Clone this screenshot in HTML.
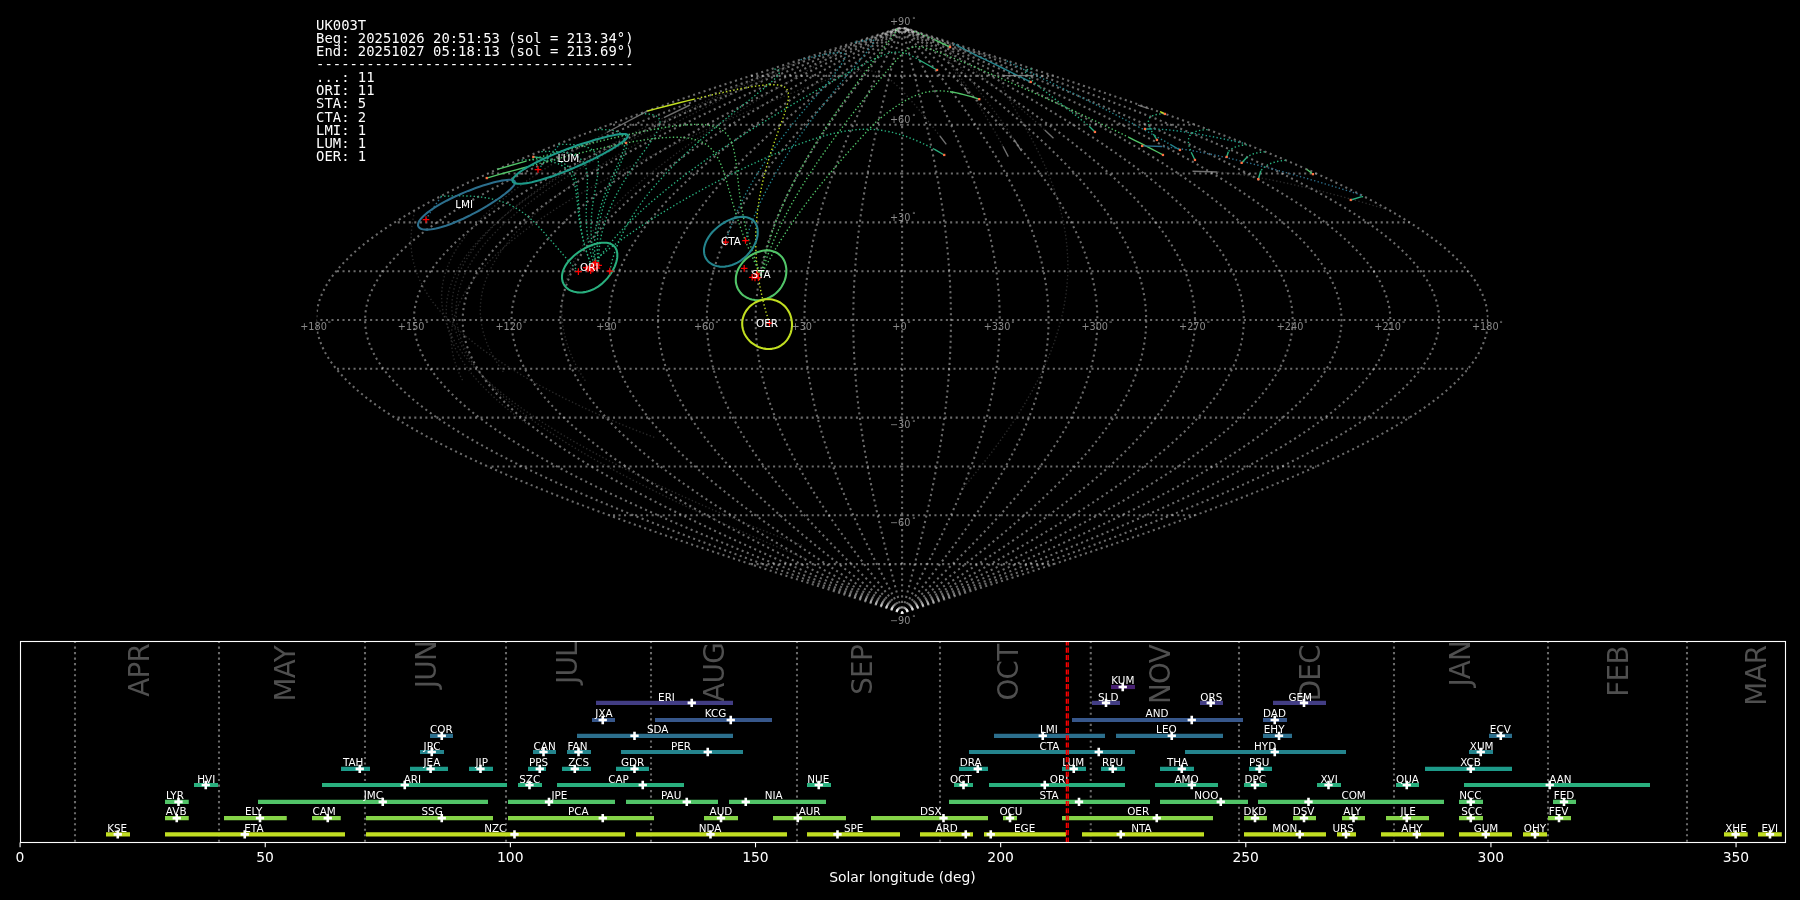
<!DOCTYPE html>
<html><head><meta charset="utf-8"><title>UK003T shower association</title>
<style>
html,body{margin:0;padding:0;background:#000;}
body{width:1800px;height:900px;overflow:hidden;}
svg{display:block;will-change:transform;opacity:0.999;}
text{white-space:pre;}
</style></head><body>
<svg width="1800" height="900" viewBox="0 0 1800 900">
<rect width="1800" height="900" fill="#000"/>
<clipPath id="skyclip"><rect x="316.7" y="0" width="1171.8" height="640"/></clipPath>
<g id="grid" clip-path="url(#skyclip)" fill="none" stroke="#fff" stroke-opacity="0.42" stroke-width="2.08" stroke-dasharray="2.08 3.44">
<path d="M902.1 564.12H750.46"/>
<path d="M1053.74 564.12H902.1" stroke-dashoffset="0.87"/>
<path d="M902.1 515.3H609.15"/>
<path d="M1195.05 515.3H902.1" stroke-dashoffset="0.87"/>
<path d="M902.1 466.48H487.81"/>
<path d="M1316.39 466.48H902.1" stroke-dashoffset="0.87"/>
<path d="M902.1 417.65H394.7"/>
<path d="M1409.5 417.65H902.1" stroke-dashoffset="0.87"/>
<path d="M902.1 368.82H336.16"/>
<path d="M1468.04 368.82H902.1" stroke-dashoffset="0.87"/>
<path d="M902.1 320H316.2"/>
<path d="M1488 320H902.1" stroke-dashoffset="0.87"/>
<path d="M902.1 271.18H336.16"/>
<path d="M1468.04 271.18H902.1" stroke-dashoffset="0.87"/>
<path d="M902.1 222.35H394.7"/>
<path d="M1409.5 222.35H902.1" stroke-dashoffset="0.87"/>
<path d="M902.1 173.53H487.81"/>
<path d="M1316.39 173.53H902.1" stroke-dashoffset="0.87"/>
<path d="M902.1 124.7H609.15"/>
<path d="M1195.05 124.7H902.1" stroke-dashoffset="0.87"/>
<path d="M902.1 75.88H750.46"/>
<path d="M1053.74 75.88H902.1" stroke-dashoffset="0.87"/>
<path d="M902.1 612.95 L881.65 606.44 L861.23 599.93 L840.86 593.42 L820.56 586.91 L800.36 580.4 L780.28 573.89 L760.36 567.38 L740.6 560.87 L721.05 554.36 L701.71 547.85 L682.62 541.34 L663.79 534.83 L645.26 528.32 L627.04 521.81 L609.15 515.3 L591.62 508.79 L574.47 502.28 L557.72 495.77 L541.38 489.26 L525.49 482.75 L510.06 476.24 L495.1 469.73 L480.64 463.22 L466.69 456.71 L453.27 450.2 L440.4 443.69 L428.1 437.18 L416.37 430.67 L405.23 424.16 L394.7 417.65 L384.78 411.14 L375.5 404.63 L366.85 398.12 L358.86 391.61 L351.53 385.1 L344.88 378.59 L338.9 372.08 L333.6 365.57 L329 359.06 L325.1 352.55 L321.9 346.04 L319.41 339.53 L317.63 333.02 L316.56 326.51 L316.2 320 L316.56 313.49 L317.63 306.98 L319.41 300.47 L321.9 293.96 L325.1 287.45 L329 280.94 L333.6 274.43 L338.9 267.92 L344.88 261.41 L351.53 254.9 L358.86 248.39 L366.85 241.88 L375.5 235.37 L384.78 228.86 L394.7 222.35 L405.23 215.84 L416.37 209.33 L428.1 202.82 L440.4 196.31 L453.27 189.8 L466.69 183.29 L480.64 176.78 L495.1 170.27 L510.06 163.76 L525.49 157.25 L541.38 150.74 L557.72 144.23 L574.47 137.72 L591.62 131.21 L609.15 124.7 L627.04 118.19 L645.26 111.68 L663.79 105.17 L682.62 98.66 L701.71 92.15 L721.05 85.64 L740.6 79.13 L760.36 72.62 L780.28 66.11 L800.36 59.6 L820.56 53.09 L840.86 46.58 L861.23 40.07 L881.65 33.56 L899.54 27.86" stroke-dashoffset="1"/>
<path d="M902.1 612.95 L883.36 606.44 L864.64 599.93 L845.96 593.42 L827.35 586.91 L808.84 580.4 L790.44 573.89 L772.17 567.38 L754.06 560.87 L736.13 554.36 L718.41 547.85 L700.91 541.34 L683.65 534.83 L666.66 528.32 L649.96 521.81 L633.56 515.3 L617.49 508.79 L601.77 502.28 L586.42 495.77 L571.44 489.26 L556.87 482.75 L542.73 476.24 L529.02 469.73 L515.76 463.22 L502.98 456.71 L490.68 450.2 L478.88 443.69 L467.6 437.18 L456.84 430.67 L446.63 424.16 L436.98 417.65 L427.89 411.14 L419.38 404.63 L411.46 398.12 L404.13 391.61 L397.41 385.1 L391.31 378.59 L385.83 372.08 L380.98 365.57 L376.76 359.06 L373.18 352.55 L370.25 346.04 L367.97 339.53 L366.33 333.02 L365.35 326.51 L365.03 320 L365.35 313.49 L366.33 306.98 L367.97 300.47 L370.25 293.96 L373.18 287.45 L376.76 280.94 L380.98 274.43 L385.83 267.92 L391.31 261.41 L397.41 254.9 L404.13 248.39 L411.46 241.88 L419.38 235.37 L427.89 228.86 L436.98 222.35 L446.63 215.84 L456.84 209.33 L467.6 202.82 L478.88 196.31 L490.68 189.8 L502.98 183.29 L515.76 176.78 L529.02 170.27 L542.73 163.76 L556.87 157.25 L571.44 150.74 L586.42 144.23 L601.77 137.72 L617.49 131.21 L633.56 124.7 L649.96 118.19 L666.66 111.68 L683.65 105.17 L700.91 98.66 L718.41 92.15 L736.13 85.64 L754.06 79.13 L772.17 72.62 L790.44 66.11 L808.84 59.6 L827.35 53.09 L845.96 46.58 L864.64 40.07 L883.36 33.56 L899.76 27.86" stroke-dashoffset="1"/>
<path d="M902.1 612.95 L885.06 606.44 L868.04 599.93 L851.06 593.42 L834.15 586.91 L817.32 580.4 L800.59 573.89 L783.98 567.38 L767.52 560.87 L751.22 554.36 L735.11 547.85 L719.2 541.34 L703.51 534.83 L688.07 528.32 L672.88 521.81 L657.97 515.3 L643.37 508.79 L629.07 502.28 L615.11 495.77 L601.5 489.26 L588.26 482.75 L575.4 476.24 L562.93 469.73 L550.88 463.22 L539.26 456.71 L528.08 450.2 L517.35 443.69 L507.1 437.18 L497.32 430.67 L488.04 424.16 L479.26 417.65 L471 411.14 L463.26 404.63 L456.06 398.12 L449.4 391.61 L443.3 385.1 L437.75 378.59 L432.76 372.08 L428.35 365.57 L424.52 359.06 L421.27 352.55 L418.6 346.04 L416.52 339.53 L415.04 333.02 L414.15 326.51 L413.85 320 L414.15 313.49 L415.04 306.98 L416.52 300.47 L418.6 293.96 L421.27 287.45 L424.52 280.94 L428.35 274.43 L432.76 267.92 L437.75 261.41 L443.3 254.9 L449.4 248.39 L456.06 241.88 L463.26 235.37 L471 228.86 L479.26 222.35 L488.04 215.84 L497.32 209.33 L507.1 202.82 L517.35 196.31 L528.08 189.8 L539.26 183.29 L550.88 176.78 L562.93 170.27 L575.4 163.76 L588.26 157.25 L601.5 150.74 L615.11 144.23 L629.07 137.72 L643.37 131.21 L657.97 124.7 L672.88 118.19 L688.07 111.68 L703.51 105.17 L719.2 98.66 L735.11 92.15 L751.22 85.64 L767.52 79.13 L783.98 72.62 L800.59 66.11 L817.32 59.6 L834.15 53.09 L851.06 46.58 L868.04 40.07 L885.06 33.56 L899.97 27.86" stroke-dashoffset="1"/>
<path d="M902.1 612.95 L886.76 606.44 L871.45 599.93 L856.17 593.42 L840.94 586.91 L825.79 580.4 L810.74 573.89 L795.79 567.38 L780.98 560.87 L766.31 554.36 L751.81 547.85 L737.49 541.34 L723.37 534.83 L709.47 528.32 L695.8 521.81 L682.39 515.3 L669.24 508.79 L656.38 502.28 L643.81 495.77 L631.56 489.26 L619.64 482.75 L608.07 476.24 L596.85 469.73 L586 463.22 L575.54 456.71 L565.48 450.2 L555.83 443.69 L546.6 437.18 L537.8 430.67 L529.45 424.16 L521.55 417.65 L514.11 411.14 L507.15 404.63 L500.67 398.12 L494.67 391.61 L489.18 385.1 L484.18 378.59 L479.7 372.08 L475.73 365.57 L472.28 359.06 L469.35 352.55 L466.95 346.04 L465.08 339.53 L463.75 333.02 L462.94 326.51 L462.68 320 L462.94 313.49 L463.75 306.98 L465.08 300.47 L466.95 293.96 L469.35 287.45 L472.28 280.94 L475.73 274.43 L479.7 267.92 L484.18 261.41 L489.18 254.9 L494.67 248.39 L500.67 241.88 L507.15 235.37 L514.11 228.86 L521.55 222.35 L529.45 215.84 L537.8 209.33 L546.6 202.82 L555.83 196.31 L565.48 189.8 L575.54 183.29 L586 176.78 L596.85 170.27 L608.07 163.76 L619.64 157.25 L631.56 150.74 L643.81 144.23 L656.38 137.72 L669.24 131.21 L682.39 124.7 L695.8 118.19 L709.47 111.68 L723.37 105.17 L737.49 98.66 L751.81 92.15 L766.31 85.64 L780.98 79.13 L795.79 72.62 L810.74 66.11 L825.79 59.6 L840.94 53.09 L856.17 46.58 L871.45 40.07 L886.76 33.56 L900.18 27.86" stroke-dashoffset="1"/>
<path d="M902.1 612.95 L888.47 606.44 L874.85 599.93 L861.27 593.42 L847.74 586.91 L834.27 580.4 L820.89 573.89 L807.61 567.38 L794.44 560.87 L781.4 554.36 L768.51 547.85 L755.78 541.34 L743.23 534.83 L730.87 528.32 L718.72 521.81 L706.8 515.3 L695.11 508.79 L683.68 502.28 L672.51 495.77 L661.62 489.26 L651.03 482.75 L640.74 476.24 L630.77 469.73 L621.13 463.22 L611.83 456.71 L602.88 450.2 L594.3 443.69 L586.1 437.18 L578.28 430.67 L570.85 424.16 L563.83 417.65 L557.22 411.14 L551.03 404.63 L545.27 398.12 L539.94 391.61 L535.06 385.1 L530.62 378.59 L526.63 372.08 L523.1 365.57 L520.04 359.06 L517.43 352.55 L515.3 346.04 L513.64 339.53 L512.45 333.02 L511.74 326.51 L511.5 320 L511.74 313.49 L512.45 306.98 L513.64 300.47 L515.3 293.96 L517.43 287.45 L520.04 280.94 L523.1 274.43 L526.63 267.92 L530.62 261.41 L535.06 254.9 L539.94 248.39 L545.27 241.88 L551.03 235.37 L557.22 228.86 L563.83 222.35 L570.85 215.84 L578.28 209.33 L586.1 202.82 L594.3 196.31 L602.88 189.8 L611.83 183.29 L621.13 176.78 L630.77 170.27 L640.74 163.76 L651.03 157.25 L661.62 150.74 L672.51 144.23 L683.68 137.72 L695.11 131.21 L706.8 124.7 L718.72 118.19 L730.87 111.68 L743.23 105.17 L755.78 98.66 L768.51 92.15 L781.4 85.64 L794.44 79.13 L807.61 72.62 L820.89 66.11 L834.27 59.6 L847.74 53.09 L861.27 46.58 L874.85 40.07 L888.47 33.56 L900.4 27.86" stroke-dashoffset="1"/>
<path d="M902.1 612.95 L890.17 606.44 L878.26 599.93 L866.37 593.42 L854.53 586.91 L842.75 580.4 L831.04 573.89 L819.42 567.38 L807.89 560.87 L796.49 554.36 L785.21 547.85 L774.07 541.34 L763.09 534.83 L752.28 528.32 L741.65 521.81 L731.21 515.3 L720.99 508.79 L710.98 502.28 L701.21 495.77 L691.68 489.26 L682.41 482.75 L673.41 476.24 L664.68 469.73 L656.25 463.22 L648.11 456.71 L640.29 450.2 L632.78 443.69 L625.6 437.18 L618.76 430.67 L612.26 424.16 L606.11 417.65 L600.33 411.14 L594.91 404.63 L589.87 398.12 L585.21 391.61 L580.94 385.1 L577.05 378.59 L573.56 372.08 L570.48 365.57 L567.79 359.06 L565.52 352.55 L563.65 346.04 L562.2 339.53 L561.16 333.02 L560.53 326.51 L560.33 320 L560.53 313.49 L561.16 306.98 L562.2 300.47 L563.65 293.96 L565.52 287.45 L567.79 280.94 L570.48 274.43 L573.56 267.92 L577.05 261.41 L580.94 254.9 L585.21 248.39 L589.87 241.88 L594.91 235.37 L600.33 228.86 L606.11 222.35 L612.26 215.84 L618.76 209.33 L625.6 202.82 L632.78 196.31 L640.29 189.8 L648.11 183.29 L656.25 176.78 L664.68 170.27 L673.41 163.76 L682.41 157.25 L691.68 150.74 L701.21 144.23 L710.98 137.72 L720.99 131.21 L731.21 124.7 L741.65 118.19 L752.28 111.68 L763.09 105.17 L774.07 98.66 L785.21 92.15 L796.49 85.64 L807.89 79.13 L819.42 72.62 L831.04 66.11 L842.75 59.6 L854.53 53.09 L866.37 46.58 L878.26 40.07 L890.17 33.56 L900.61 27.86" stroke-dashoffset="1"/>
<path d="M902.1 612.95 L891.88 606.44 L881.66 599.93 L871.48 593.42 L861.33 586.91 L851.23 580.4 L841.19 573.89 L831.23 567.38 L821.35 560.87 L811.57 554.36 L801.91 547.85 L792.36 541.34 L782.95 534.83 L773.68 528.32 L764.57 521.81 L755.62 515.3 L746.86 508.79 L738.28 502.28 L729.91 495.77 L721.74 489.26 L713.8 482.75 L706.08 476.24 L698.6 469.73 L691.37 463.22 L684.4 456.71 L677.69 450.2 L671.25 443.69 L665.1 437.18 L659.23 430.67 L653.66 424.16 L648.4 417.65 L643.44 411.14 L638.8 404.63 L634.48 398.12 L630.48 391.61 L626.82 385.1 L623.49 378.59 L620.5 372.08 L617.85 365.57 L615.55 359.06 L613.6 352.55 L612 346.04 L610.75 339.53 L609.86 333.02 L609.33 326.51 L609.15 320 L609.33 313.49 L609.86 306.98 L610.75 300.47 L612 293.96 L613.6 287.45 L615.55 280.94 L617.85 274.43 L620.5 267.92 L623.49 261.41 L626.82 254.9 L630.48 248.39 L634.48 241.88 L638.8 235.37 L643.44 228.86 L648.4 222.35 L653.66 215.84 L659.23 209.33 L665.1 202.82 L671.25 196.31 L677.69 189.8 L684.4 183.29 L691.37 176.78 L698.6 170.27 L706.08 163.76 L713.8 157.25 L721.74 150.74 L729.91 144.23 L738.28 137.72 L746.86 131.21 L755.62 124.7 L764.57 118.19 L773.68 111.68 L782.95 105.17 L792.36 98.66 L801.91 92.15 L811.57 85.64 L821.35 79.13 L831.23 72.62 L841.19 66.11 L851.23 59.6 L861.33 53.09 L871.48 46.58 L881.66 40.07 L891.88 33.56 L900.82 27.86" stroke-dashoffset="1"/>
<path d="M902.1 612.95 L893.58 606.44 L885.07 599.93 L876.58 593.42 L868.12 586.91 L859.71 580.4 L851.34 573.89 L843.04 567.38 L834.81 560.87 L826.66 554.36 L818.6 547.85 L810.65 541.34 L802.81 534.83 L795.08 528.32 L787.49 521.81 L780.04 515.3 L772.73 508.79 L765.59 502.28 L758.61 495.77 L751.8 489.26 L745.18 482.75 L738.75 476.24 L732.52 469.73 L726.49 463.22 L720.68 456.71 L715.09 450.2 L709.73 443.69 L704.6 437.18 L699.71 430.67 L695.07 424.16 L690.68 417.65 L686.55 411.14 L682.68 404.63 L679.08 398.12 L675.75 391.61 L672.7 385.1 L669.92 378.59 L667.43 372.08 L665.23 365.57 L663.31 359.06 L661.68 352.55 L660.35 346.04 L659.31 339.53 L658.57 333.02 L658.12 326.51 L657.98 320 L658.12 313.49 L658.57 306.98 L659.31 300.47 L660.35 293.96 L661.68 287.45 L663.31 280.94 L665.23 274.43 L667.43 267.92 L669.92 261.41 L672.7 254.9 L675.75 248.39 L679.08 241.88 L682.68 235.37 L686.55 228.86 L690.68 222.35 L695.07 215.84 L699.71 209.33 L704.6 202.82 L709.73 196.31 L715.09 189.8 L720.68 183.29 L726.49 176.78 L732.52 170.27 L738.75 163.76 L745.18 157.25 L751.8 150.74 L758.61 144.23 L765.59 137.72 L772.73 131.21 L780.04 124.7 L787.49 118.19 L795.08 111.68 L802.81 105.17 L810.65 98.66 L818.6 92.15 L826.66 85.64 L834.81 79.13 L843.04 72.62 L851.34 66.11 L859.71 59.6 L868.12 53.09 L876.58 46.58 L885.07 40.07 L893.58 33.56 L901.03 27.86" stroke-dashoffset="1"/>
<path d="M902.1 612.95 L895.28 606.44 L888.48 599.93 L881.69 593.42 L874.92 586.91 L868.19 580.4 L861.49 573.89 L854.85 567.38 L848.27 560.87 L841.75 554.36 L835.3 547.85 L828.94 541.34 L822.66 534.83 L816.49 528.32 L810.41 521.81 L804.45 515.3 L798.61 508.79 L792.89 502.28 L787.31 495.77 L781.86 489.26 L776.56 482.75 L771.42 476.24 L766.43 469.73 L761.61 463.22 L756.96 456.71 L752.49 450.2 L748.2 443.69 L744.1 437.18 L740.19 430.67 L736.48 424.16 L732.97 417.65 L729.66 411.14 L726.57 404.63 L723.68 398.12 L721.02 391.61 L718.58 385.1 L716.36 378.59 L714.37 372.08 L712.6 365.57 L711.07 359.06 L709.77 352.55 L708.7 346.04 L707.87 339.53 L707.28 333.02 L706.92 326.51 L706.8 320 L706.92 313.49 L707.28 306.98 L707.87 300.47 L708.7 293.96 L709.77 287.45 L711.07 280.94 L712.6 274.43 L714.37 267.92 L716.36 261.41 L718.58 254.9 L721.02 248.39 L723.68 241.88 L726.57 235.37 L729.66 228.86 L732.97 222.35 L736.48 215.84 L740.19 209.33 L744.1 202.82 L748.2 196.31 L752.49 189.8 L756.96 183.29 L761.61 176.78 L766.43 170.27 L771.42 163.76 L776.56 157.25 L781.86 150.74 L787.31 144.23 L792.89 137.72 L798.61 131.21 L804.45 124.7 L810.41 118.19 L816.49 111.68 L822.66 105.17 L828.94 98.66 L835.3 92.15 L841.75 85.64 L848.27 79.13 L854.85 72.62 L861.49 66.11 L868.19 59.6 L874.92 53.09 L881.69 46.58 L888.48 40.07 L895.28 33.56 L901.25 27.86" stroke-dashoffset="1"/>
<path d="M902.1 612.95 L896.99 606.44 L891.88 599.93 L886.79 593.42 L881.71 586.91 L876.66 580.4 L871.65 573.89 L866.66 567.38 L861.73 560.87 L856.84 554.36 L852 547.85 L847.23 541.34 L842.52 534.83 L837.89 528.32 L833.33 521.81 L828.86 515.3 L824.48 508.79 L820.19 502.28 L816 495.77 L811.92 489.26 L807.95 482.75 L804.09 476.24 L800.35 469.73 L796.73 463.22 L793.25 456.71 L789.89 450.2 L786.68 443.69 L783.6 437.18 L780.67 430.67 L777.88 424.16 L775.25 417.65 L772.77 411.14 L770.45 404.63 L768.29 398.12 L766.29 391.61 L764.46 385.1 L762.79 378.59 L761.3 372.08 L759.98 365.57 L758.83 359.06 L757.85 352.55 L757.05 346.04 L756.43 339.53 L755.98 333.02 L755.71 326.51 L755.62 320 L755.71 313.49 L755.98 306.98 L756.43 300.47 L757.05 293.96 L757.85 287.45 L758.83 280.94 L759.98 274.43 L761.3 267.92 L762.79 261.41 L764.46 254.9 L766.29 248.39 L768.29 241.88 L770.45 235.37 L772.77 228.86 L775.25 222.35 L777.88 215.84 L780.67 209.33 L783.6 202.82 L786.68 196.31 L789.89 189.8 L793.25 183.29 L796.73 176.78 L800.35 170.27 L804.09 163.76 L807.95 157.25 L811.92 150.74 L816 144.23 L820.19 137.72 L824.48 131.21 L828.86 124.7 L833.33 118.19 L837.89 111.68 L842.52 105.17 L847.23 98.66 L852 92.15 L856.84 85.64 L861.73 79.13 L866.66 72.62 L871.65 66.11 L876.66 59.6 L881.71 53.09 L886.79 46.58 L891.88 40.07 L896.99 33.56 L901.46 27.86" stroke-dashoffset="1"/>
<path d="M902.1 612.95 L898.69 606.44 L895.29 599.93 L891.89 593.42 L888.51 586.91 L885.14 580.4 L881.8 573.89 L878.48 567.38 L875.18 560.87 L871.92 554.36 L868.7 547.85 L865.52 541.34 L862.38 534.83 L859.29 528.32 L856.26 521.81 L853.27 515.3 L850.35 508.79 L847.49 502.28 L844.7 495.77 L841.98 489.26 L839.33 482.75 L836.76 476.24 L834.27 469.73 L831.86 463.22 L829.53 456.71 L827.3 450.2 L825.15 443.69 L823.1 437.18 L821.14 430.67 L819.29 424.16 L817.53 417.65 L815.88 411.14 L814.33 404.63 L812.89 398.12 L811.56 391.61 L810.34 385.1 L809.23 378.59 L808.23 372.08 L807.35 365.57 L806.58 359.06 L805.93 352.55 L805.4 346.04 L804.98 339.53 L804.69 333.02 L804.51 326.51 L804.45 320 L804.51 313.49 L804.69 306.98 L804.98 300.47 L805.4 293.96 L805.93 287.45 L806.58 280.94 L807.35 274.43 L808.23 267.92 L809.23 261.41 L810.34 254.9 L811.56 248.39 L812.89 241.88 L814.33 235.37 L815.88 228.86 L817.53 222.35 L819.29 215.84 L821.14 209.33 L823.1 202.82 L825.15 196.31 L827.3 189.8 L829.53 183.29 L831.86 176.78 L834.27 170.27 L836.76 163.76 L839.33 157.25 L841.98 150.74 L844.7 144.23 L847.49 137.72 L850.35 131.21 L853.27 124.7 L856.26 118.19 L859.29 111.68 L862.38 105.17 L865.52 98.66 L868.7 92.15 L871.92 85.64 L875.18 79.13 L878.48 72.62 L881.8 66.11 L885.14 59.6 L888.51 53.09 L891.89 46.58 L895.29 40.07 L898.69 33.56 L901.67 27.86" stroke-dashoffset="1"/>
<path d="M902.1 612.95 L900.4 606.44 L898.69 599.93 L897 593.42 L895.3 586.91 L893.62 580.4 L891.95 573.89 L890.29 567.38 L888.64 560.87 L887.01 554.36 L885.4 547.85 L883.81 541.34 L882.24 534.83 L880.7 528.32 L879.18 521.81 L877.69 515.3 L876.23 508.79 L874.8 502.28 L873.4 495.77 L872.04 489.26 L870.72 482.75 L869.43 476.24 L868.18 469.73 L866.98 463.22 L865.82 456.71 L864.7 450.2 L863.63 443.69 L862.6 437.18 L861.62 430.67 L860.69 424.16 L859.82 417.65 L858.99 411.14 L858.22 404.63 L857.5 398.12 L856.83 391.61 L856.22 385.1 L855.66 378.59 L855.17 372.08 L854.73 365.57 L854.34 359.06 L854.02 352.55 L853.75 346.04 L853.54 339.53 L853.39 333.02 L853.3 326.51 L853.27 320 L853.3 313.49 L853.39 306.98 L853.54 300.47 L853.75 293.96 L854.02 287.45 L854.34 280.94 L854.73 274.43 L855.17 267.92 L855.66 261.41 L856.22 254.9 L856.83 248.39 L857.5 241.88 L858.22 235.37 L858.99 228.86 L859.82 222.35 L860.69 215.84 L861.62 209.33 L862.6 202.82 L863.63 196.31 L864.7 189.8 L865.82 183.29 L866.98 176.78 L868.18 170.27 L869.43 163.76 L870.72 157.25 L872.04 150.74 L873.4 144.23 L874.8 137.72 L876.23 131.21 L877.69 124.7 L879.18 118.19 L880.7 111.68 L882.24 105.17 L883.81 98.66 L885.4 92.15 L887.01 85.64 L888.64 79.13 L890.29 72.62 L891.95 66.11 L893.62 59.6 L895.3 53.09 L897 46.58 L898.69 40.07 L900.4 33.56 L901.89 27.86" stroke-dashoffset="1"/>
<path d="M902.1 612.95 L902.1 606.44 L902.1 599.93 L902.1 593.42 L902.1 586.91 L902.1 580.4 L902.1 573.89 L902.1 567.38 L902.1 560.87 L902.1 554.36 L902.1 547.85 L902.1 541.34 L902.1 534.83 L902.1 528.32 L902.1 521.81 L902.1 515.3 L902.1 508.79 L902.1 502.28 L902.1 495.77 L902.1 489.26 L902.1 482.75 L902.1 476.24 L902.1 469.73 L902.1 463.22 L902.1 456.71 L902.1 450.2 L902.1 443.69 L902.1 437.18 L902.1 430.67 L902.1 424.16 L902.1 417.65 L902.1 411.14 L902.1 404.63 L902.1 398.12 L902.1 391.61 L902.1 385.1 L902.1 378.59 L902.1 372.08 L902.1 365.57 L902.1 359.06 L902.1 352.55 L902.1 346.04 L902.1 339.53 L902.1 333.02 L902.1 326.51 L902.1 320 L902.1 313.49 L902.1 306.98 L902.1 300.47 L902.1 293.96 L902.1 287.45 L902.1 280.94 L902.1 274.43 L902.1 267.92 L902.1 261.41 L902.1 254.9 L902.1 248.39 L902.1 241.88 L902.1 235.37 L902.1 228.86 L902.1 222.35 L902.1 215.84 L902.1 209.33 L902.1 202.82 L902.1 196.31 L902.1 189.8 L902.1 183.29 L902.1 176.78 L902.1 170.27 L902.1 163.76 L902.1 157.25 L902.1 150.74 L902.1 144.23 L902.1 137.72 L902.1 131.21 L902.1 124.7 L902.1 118.19 L902.1 111.68 L902.1 105.17 L902.1 98.66 L902.1 92.15 L902.1 85.64 L902.1 79.13 L902.1 72.62 L902.1 66.11 L902.1 59.6 L902.1 53.09 L902.1 46.58 L902.1 40.07 L902.1 33.56 L902.1 27.86" stroke-dashoffset="1"/>
<path d="M902.1 612.95 L903.8 606.44 L905.51 599.93 L907.2 593.42 L908.9 586.91 L910.58 580.4 L912.25 573.89 L913.91 567.38 L915.56 560.87 L917.19 554.36 L918.8 547.85 L920.39 541.34 L921.96 534.83 L923.5 528.32 L925.02 521.81 L926.51 515.3 L927.97 508.79 L929.4 502.28 L930.8 495.77 L932.16 489.26 L933.48 482.75 L934.77 476.24 L936.02 469.73 L937.22 463.22 L938.38 456.71 L939.5 450.2 L940.57 443.69 L941.6 437.18 L942.58 430.67 L943.51 424.16 L944.38 417.65 L945.21 411.14 L945.98 404.63 L946.7 398.12 L947.37 391.61 L947.98 385.1 L948.54 378.59 L949.03 372.08 L949.47 365.57 L949.86 359.06 L950.18 352.55 L950.45 346.04 L950.66 339.53 L950.81 333.02 L950.9 326.51 L950.93 320 L950.9 313.49 L950.81 306.98 L950.66 300.47 L950.45 293.96 L950.18 287.45 L949.86 280.94 L949.47 274.43 L949.03 267.92 L948.54 261.41 L947.98 254.9 L947.37 248.39 L946.7 241.88 L945.98 235.37 L945.21 228.86 L944.38 222.35 L943.51 215.84 L942.58 209.33 L941.6 202.82 L940.57 196.31 L939.5 189.8 L938.38 183.29 L937.22 176.78 L936.02 170.27 L934.77 163.76 L933.48 157.25 L932.16 150.74 L930.8 144.23 L929.4 137.72 L927.97 131.21 L926.51 124.7 L925.02 118.19 L923.5 111.68 L921.96 105.17 L920.39 98.66 L918.8 92.15 L917.19 85.64 L915.56 79.13 L913.91 72.62 L912.25 66.11 L910.58 59.6 L908.9 53.09 L907.2 46.58 L905.51 40.07 L903.8 33.56 L902.31 27.86" stroke-dashoffset="1"/>
<path d="M902.1 612.95 L905.51 606.44 L908.91 599.93 L912.31 593.42 L915.69 586.91 L919.06 580.4 L922.4 573.89 L925.72 567.38 L929.02 560.87 L932.28 554.36 L935.5 547.85 L938.68 541.34 L941.82 534.83 L944.91 528.32 L947.94 521.81 L950.93 515.3 L953.85 508.79 L956.71 502.28 L959.5 495.77 L962.22 489.26 L964.87 482.75 L967.44 476.24 L969.93 469.73 L972.34 463.22 L974.67 456.71 L976.9 450.2 L979.05 443.69 L981.1 437.18 L983.06 430.67 L984.91 424.16 L986.67 417.65 L988.32 411.14 L989.87 404.63 L991.31 398.12 L992.64 391.61 L993.86 385.1 L994.97 378.59 L995.97 372.08 L996.85 365.57 L997.62 359.06 L998.27 352.55 L998.8 346.04 L999.22 339.53 L999.51 333.02 L999.69 326.51 L999.75 320 L999.69 313.49 L999.51 306.98 L999.22 300.47 L998.8 293.96 L998.27 287.45 L997.62 280.94 L996.85 274.43 L995.97 267.92 L994.97 261.41 L993.86 254.9 L992.64 248.39 L991.31 241.88 L989.87 235.37 L988.32 228.86 L986.67 222.35 L984.91 215.84 L983.06 209.33 L981.1 202.82 L979.05 196.31 L976.9 189.8 L974.67 183.29 L972.34 176.78 L969.93 170.27 L967.44 163.76 L964.87 157.25 L962.22 150.74 L959.5 144.23 L956.71 137.72 L953.85 131.21 L950.93 124.7 L947.94 118.19 L944.91 111.68 L941.82 105.17 L938.68 98.66 L935.5 92.15 L932.28 85.64 L929.02 79.13 L925.72 72.62 L922.4 66.11 L919.06 59.6 L915.69 53.09 L912.31 46.58 L908.91 40.07 L905.51 33.56 L902.53 27.86" stroke-dashoffset="1"/>
<path d="M902.1 612.95 L907.21 606.44 L912.32 599.93 L917.41 593.42 L922.49 586.91 L927.54 580.4 L932.55 573.89 L937.54 567.38 L942.47 560.87 L947.36 554.36 L952.2 547.85 L956.97 541.34 L961.68 534.83 L966.31 528.32 L970.87 521.81 L975.34 515.3 L979.72 508.79 L984.01 502.28 L988.2 495.77 L992.28 489.26 L996.25 482.75 L1000.11 476.24 L1003.85 469.73 L1007.47 463.22 L1010.95 456.71 L1014.31 450.2 L1017.52 443.69 L1020.6 437.18 L1023.53 430.67 L1026.32 424.16 L1028.95 417.65 L1031.43 411.14 L1033.75 404.63 L1035.91 398.12 L1037.91 391.61 L1039.74 385.1 L1041.41 378.59 L1042.9 372.08 L1044.22 365.57 L1045.37 359.06 L1046.35 352.55 L1047.15 346.04 L1047.77 339.53 L1048.22 333.02 L1048.49 326.51 L1048.58 320 L1048.49 313.49 L1048.22 306.98 L1047.77 300.47 L1047.15 293.96 L1046.35 287.45 L1045.37 280.94 L1044.22 274.43 L1042.9 267.92 L1041.41 261.41 L1039.74 254.9 L1037.91 248.39 L1035.91 241.88 L1033.75 235.37 L1031.43 228.86 L1028.95 222.35 L1026.32 215.84 L1023.53 209.33 L1020.6 202.82 L1017.52 196.31 L1014.31 189.8 L1010.95 183.29 L1007.47 176.78 L1003.85 170.27 L1000.11 163.76 L996.25 157.25 L992.28 150.74 L988.2 144.23 L984.01 137.72 L979.72 131.21 L975.34 124.7 L970.87 118.19 L966.31 111.68 L961.68 105.17 L956.97 98.66 L952.2 92.15 L947.36 85.64 L942.47 79.13 L937.54 72.62 L932.55 66.11 L927.54 59.6 L922.49 53.09 L917.41 46.58 L912.32 40.07 L907.21 33.56 L902.74 27.86" stroke-dashoffset="1"/>
<path d="M902.1 612.95 L908.92 606.44 L915.72 599.93 L922.51 593.42 L929.28 586.91 L936.01 580.4 L942.71 573.89 L949.35 567.38 L955.93 560.87 L962.45 554.36 L968.9 547.85 L975.26 541.34 L981.54 534.83 L987.71 528.32 L993.79 521.81 L999.75 515.3 L1005.59 508.79 L1011.31 502.28 L1016.89 495.77 L1022.34 489.26 L1027.64 482.75 L1032.78 476.24 L1037.77 469.73 L1042.59 463.22 L1047.24 456.71 L1051.71 450.2 L1056 443.69 L1060.1 437.18 L1064.01 430.67 L1067.72 424.16 L1071.23 417.65 L1074.54 411.14 L1077.63 404.63 L1080.52 398.12 L1083.18 391.61 L1085.62 385.1 L1087.84 378.59 L1089.83 372.08 L1091.6 365.57 L1093.13 359.06 L1094.43 352.55 L1095.5 346.04 L1096.33 339.53 L1096.92 333.02 L1097.28 326.51 L1097.4 320 L1097.28 313.49 L1096.92 306.98 L1096.33 300.47 L1095.5 293.96 L1094.43 287.45 L1093.13 280.94 L1091.6 274.43 L1089.83 267.92 L1087.84 261.41 L1085.62 254.9 L1083.18 248.39 L1080.52 241.88 L1077.63 235.37 L1074.54 228.86 L1071.23 222.35 L1067.72 215.84 L1064.01 209.33 L1060.1 202.82 L1056 196.31 L1051.71 189.8 L1047.24 183.29 L1042.59 176.78 L1037.77 170.27 L1032.78 163.76 L1027.64 157.25 L1022.34 150.74 L1016.89 144.23 L1011.31 137.72 L1005.59 131.21 L999.75 124.7 L993.79 118.19 L987.71 111.68 L981.54 105.17 L975.26 98.66 L968.9 92.15 L962.45 85.64 L955.93 79.13 L949.35 72.62 L942.71 66.11 L936.01 59.6 L929.28 53.09 L922.51 46.58 L915.72 40.07 L908.92 33.56 L902.95 27.86" stroke-dashoffset="1"/>
<path d="M902.1 612.95 L910.62 606.44 L919.13 599.93 L927.62 593.42 L936.08 586.91 L944.49 580.4 L952.86 573.89 L961.16 567.38 L969.39 560.87 L977.54 554.36 L985.6 547.85 L993.55 541.34 L1001.39 534.83 L1009.12 528.32 L1016.71 521.81 L1024.16 515.3 L1031.47 508.79 L1038.61 502.28 L1045.59 495.77 L1052.4 489.26 L1059.02 482.75 L1065.45 476.24 L1071.68 469.73 L1077.71 463.22 L1083.52 456.71 L1089.11 450.2 L1094.47 443.69 L1099.6 437.18 L1104.49 430.67 L1109.13 424.16 L1113.52 417.65 L1117.65 411.14 L1121.52 404.63 L1125.12 398.12 L1128.45 391.61 L1131.5 385.1 L1134.28 378.59 L1136.77 372.08 L1138.97 365.57 L1140.89 359.06 L1142.52 352.55 L1143.85 346.04 L1144.89 339.53 L1145.63 333.02 L1146.08 326.51 L1146.22 320 L1146.08 313.49 L1145.63 306.98 L1144.89 300.47 L1143.85 293.96 L1142.52 287.45 L1140.89 280.94 L1138.97 274.43 L1136.77 267.92 L1134.28 261.41 L1131.5 254.9 L1128.45 248.39 L1125.12 241.88 L1121.52 235.37 L1117.65 228.86 L1113.52 222.35 L1109.13 215.84 L1104.49 209.33 L1099.6 202.82 L1094.47 196.31 L1089.11 189.8 L1083.52 183.29 L1077.71 176.78 L1071.68 170.27 L1065.45 163.76 L1059.02 157.25 L1052.4 150.74 L1045.59 144.23 L1038.61 137.72 L1031.47 131.21 L1024.16 124.7 L1016.71 118.19 L1009.12 111.68 L1001.39 105.17 L993.55 98.66 L985.6 92.15 L977.54 85.64 L969.39 79.13 L961.16 72.62 L952.86 66.11 L944.49 59.6 L936.08 53.09 L927.62 46.58 L919.13 40.07 L910.62 33.56 L903.17 27.86" stroke-dashoffset="1"/>
<path d="M902.1 612.95 L912.32 606.44 L922.54 599.93 L932.72 593.42 L942.87 586.91 L952.97 580.4 L963.01 573.89 L972.97 567.38 L982.85 560.87 L992.63 554.36 L1002.29 547.85 L1011.84 541.34 L1021.25 534.83 L1030.52 528.32 L1039.63 521.81 L1048.58 515.3 L1057.34 508.79 L1065.92 502.28 L1074.29 495.77 L1082.46 489.26 L1090.4 482.75 L1098.12 476.24 L1105.6 469.73 L1112.83 463.22 L1119.8 456.71 L1126.51 450.2 L1132.95 443.69 L1139.1 437.18 L1144.97 430.67 L1150.54 424.16 L1155.8 417.65 L1160.76 411.14 L1165.4 404.63 L1169.72 398.12 L1173.72 391.61 L1177.38 385.1 L1180.71 378.59 L1183.7 372.08 L1186.35 365.57 L1188.65 359.06 L1190.6 352.55 L1192.2 346.04 L1193.45 339.53 L1194.34 333.02 L1194.87 326.51 L1195.05 320 L1194.87 313.49 L1194.34 306.98 L1193.45 300.47 L1192.2 293.96 L1190.6 287.45 L1188.65 280.94 L1186.35 274.43 L1183.7 267.92 L1180.71 261.41 L1177.38 254.9 L1173.72 248.39 L1169.72 241.88 L1165.4 235.37 L1160.76 228.86 L1155.8 222.35 L1150.54 215.84 L1144.97 209.33 L1139.1 202.82 L1132.95 196.31 L1126.51 189.8 L1119.8 183.29 L1112.83 176.78 L1105.6 170.27 L1098.12 163.76 L1090.4 157.25 L1082.46 150.74 L1074.29 144.23 L1065.92 137.72 L1057.34 131.21 L1048.58 124.7 L1039.63 118.19 L1030.52 111.68 L1021.25 105.17 L1011.84 98.66 L1002.29 92.15 L992.63 85.64 L982.85 79.13 L972.97 72.62 L963.01 66.11 L952.97 59.6 L942.87 53.09 L932.72 46.58 L922.54 40.07 L912.32 33.56 L903.38 27.86" stroke-dashoffset="1"/>
<path d="M902.1 612.95 L914.03 606.44 L925.94 599.93 L937.83 593.42 L949.67 586.91 L961.45 580.4 L973.16 573.89 L984.78 567.38 L996.31 560.87 L1007.71 554.36 L1018.99 547.85 L1030.13 541.34 L1041.11 534.83 L1051.92 528.32 L1062.55 521.81 L1072.99 515.3 L1083.21 508.79 L1093.22 502.28 L1102.99 495.77 L1112.52 489.26 L1121.79 482.75 L1130.79 476.24 L1139.52 469.73 L1147.95 463.22 L1156.09 456.71 L1163.91 450.2 L1171.42 443.69 L1178.6 437.18 L1185.44 430.67 L1191.94 424.16 L1198.09 417.65 L1203.87 411.14 L1209.29 404.63 L1214.33 398.12 L1218.99 391.61 L1223.26 385.1 L1227.15 378.59 L1230.64 372.08 L1233.72 365.57 L1236.41 359.06 L1238.68 352.55 L1240.55 346.04 L1242 339.53 L1243.04 333.02 L1243.67 326.51 L1243.88 320 L1243.67 313.49 L1243.04 306.98 L1242 300.47 L1240.55 293.96 L1238.68 287.45 L1236.41 280.94 L1233.72 274.43 L1230.64 267.92 L1227.15 261.41 L1223.26 254.9 L1218.99 248.39 L1214.33 241.88 L1209.29 235.37 L1203.87 228.86 L1198.09 222.35 L1191.94 215.84 L1185.44 209.33 L1178.6 202.82 L1171.42 196.31 L1163.91 189.8 L1156.09 183.29 L1147.95 176.78 L1139.52 170.27 L1130.79 163.76 L1121.79 157.25 L1112.52 150.74 L1102.99 144.23 L1093.22 137.72 L1083.21 131.21 L1072.99 124.7 L1062.55 118.19 L1051.92 111.68 L1041.11 105.17 L1030.13 98.66 L1018.99 92.15 L1007.71 85.64 L996.31 79.13 L984.78 72.62 L973.16 66.11 L961.45 59.6 L949.67 53.09 L937.83 46.58 L925.94 40.07 L914.03 33.56 L903.59 27.86" stroke-dashoffset="1"/>
<path d="M902.1 612.95 L915.73 606.44 L929.35 599.93 L942.93 593.42 L956.46 586.91 L969.93 580.4 L983.31 573.89 L996.59 567.38 L1009.76 560.87 L1022.8 554.36 L1035.69 547.85 L1048.42 541.34 L1060.97 534.83 L1073.33 528.32 L1085.48 521.81 L1097.4 515.3 L1109.09 508.79 L1120.52 502.28 L1131.69 495.77 L1142.58 489.26 L1153.17 482.75 L1163.46 476.24 L1173.43 469.73 L1183.07 463.22 L1192.37 456.71 L1201.32 450.2 L1209.9 443.69 L1218.1 437.18 L1225.92 430.67 L1233.35 424.16 L1240.37 417.65 L1246.98 411.14 L1253.17 404.63 L1258.93 398.12 L1264.26 391.61 L1269.14 385.1 L1273.58 378.59 L1277.57 372.08 L1281.1 365.57 L1284.16 359.06 L1286.77 352.55 L1288.9 346.04 L1290.56 339.53 L1291.75 333.02 L1292.46 326.51 L1292.7 320 L1292.46 313.49 L1291.75 306.98 L1290.56 300.47 L1288.9 293.96 L1286.77 287.45 L1284.16 280.94 L1281.1 274.43 L1277.57 267.92 L1273.58 261.41 L1269.14 254.9 L1264.26 248.39 L1258.93 241.88 L1253.17 235.37 L1246.98 228.86 L1240.37 222.35 L1233.35 215.84 L1225.92 209.33 L1218.1 202.82 L1209.9 196.31 L1201.32 189.8 L1192.37 183.29 L1183.07 176.78 L1173.43 170.27 L1163.46 163.76 L1153.17 157.25 L1142.58 150.74 L1131.69 144.23 L1120.52 137.72 L1109.09 131.21 L1097.4 124.7 L1085.48 118.19 L1073.33 111.68 L1060.97 105.17 L1048.42 98.66 L1035.69 92.15 L1022.8 85.64 L1009.76 79.13 L996.59 72.62 L983.31 66.11 L969.93 59.6 L956.46 53.09 L942.93 46.58 L929.35 40.07 L915.73 33.56 L903.8 27.86" stroke-dashoffset="1"/>
<path d="M902.1 612.95 L917.44 606.44 L932.75 599.93 L948.03 593.42 L963.26 586.91 L978.41 580.4 L993.46 573.89 L1008.41 567.38 L1023.22 560.87 L1037.89 554.36 L1052.39 547.85 L1066.71 541.34 L1080.83 534.83 L1094.73 528.32 L1108.4 521.81 L1121.81 515.3 L1134.96 508.79 L1147.82 502.28 L1160.39 495.77 L1172.64 489.26 L1184.56 482.75 L1196.13 476.24 L1207.35 469.73 L1218.2 463.22 L1228.66 456.71 L1238.72 450.2 L1248.37 443.69 L1257.6 437.18 L1266.4 430.67 L1274.75 424.16 L1282.65 417.65 L1290.09 411.14 L1297.05 404.63 L1303.53 398.12 L1309.53 391.61 L1315.02 385.1 L1320.02 378.59 L1324.5 372.08 L1328.47 365.57 L1331.92 359.06 L1334.85 352.55 L1337.25 346.04 L1339.12 339.53 L1340.45 333.02 L1341.26 326.51 L1341.53 320 L1341.26 313.49 L1340.45 306.98 L1339.12 300.47 L1337.25 293.96 L1334.85 287.45 L1331.92 280.94 L1328.47 274.43 L1324.5 267.92 L1320.02 261.41 L1315.02 254.9 L1309.53 248.39 L1303.53 241.88 L1297.05 235.37 L1290.09 228.86 L1282.65 222.35 L1274.75 215.84 L1266.4 209.33 L1257.6 202.82 L1248.37 196.31 L1238.72 189.8 L1228.66 183.29 L1218.2 176.78 L1207.35 170.27 L1196.13 163.76 L1184.56 157.25 L1172.64 150.74 L1160.39 144.23 L1147.82 137.72 L1134.96 131.21 L1121.81 124.7 L1108.4 118.19 L1094.73 111.68 L1080.83 105.17 L1066.71 98.66 L1052.39 92.15 L1037.89 85.64 L1023.22 79.13 L1008.41 72.62 L993.46 66.11 L978.41 59.6 L963.26 53.09 L948.03 46.58 L932.75 40.07 L917.44 33.56 L904.02 27.86" stroke-dashoffset="1"/>
<path d="M902.1 612.95 L919.14 606.44 L936.16 599.93 L953.14 593.42 L970.05 586.91 L986.88 580.4 L1003.61 573.89 L1020.22 567.38 L1036.68 560.87 L1052.98 554.36 L1069.09 547.85 L1085 541.34 L1100.69 534.83 L1116.13 528.32 L1131.32 521.81 L1146.23 515.3 L1160.83 508.79 L1175.13 502.28 L1189.09 495.77 L1202.7 489.26 L1215.94 482.75 L1228.8 476.24 L1241.27 469.73 L1253.32 463.22 L1264.94 456.71 L1276.12 450.2 L1286.85 443.69 L1297.1 437.18 L1306.88 430.67 L1316.16 424.16 L1324.94 417.65 L1333.2 411.14 L1340.94 404.63 L1348.14 398.12 L1354.8 391.61 L1360.9 385.1 L1366.45 378.59 L1371.44 372.08 L1375.85 365.57 L1379.68 359.06 L1382.93 352.55 L1385.6 346.04 L1387.68 339.53 L1389.16 333.02 L1390.05 326.51 L1390.35 320 L1390.05 313.49 L1389.16 306.98 L1387.68 300.47 L1385.6 293.96 L1382.93 287.45 L1379.68 280.94 L1375.85 274.43 L1371.44 267.92 L1366.45 261.41 L1360.9 254.9 L1354.8 248.39 L1348.14 241.88 L1340.94 235.37 L1333.2 228.86 L1324.94 222.35 L1316.16 215.84 L1306.88 209.33 L1297.1 202.82 L1286.85 196.31 L1276.12 189.8 L1264.94 183.29 L1253.32 176.78 L1241.27 170.27 L1228.8 163.76 L1215.94 157.25 L1202.7 150.74 L1189.09 144.23 L1175.13 137.72 L1160.83 131.21 L1146.23 124.7 L1131.32 118.19 L1116.13 111.68 L1100.69 105.17 L1085 98.66 L1069.09 92.15 L1052.98 85.64 L1036.68 79.13 L1020.22 72.62 L1003.61 66.11 L986.88 59.6 L970.05 53.09 L953.14 46.58 L936.16 40.07 L919.14 33.56 L904.23 27.86" stroke-dashoffset="1"/>
<path d="M902.1 612.95 L920.84 606.44 L939.56 599.93 L958.24 593.42 L976.85 586.91 L995.36 580.4 L1013.76 573.89 L1032.03 567.38 L1050.14 560.87 L1068.07 554.36 L1085.79 547.85 L1103.29 541.34 L1120.55 534.83 L1137.54 528.32 L1154.24 521.81 L1170.64 515.3 L1186.71 508.79 L1202.43 502.28 L1217.78 495.77 L1232.76 489.26 L1247.33 482.75 L1261.47 476.24 L1275.18 469.73 L1288.44 463.22 L1301.22 456.71 L1313.52 450.2 L1325.32 443.69 L1336.6 437.18 L1347.36 430.67 L1357.57 424.16 L1367.22 417.65 L1376.31 411.14 L1384.82 404.63 L1392.74 398.12 L1400.07 391.61 L1406.79 385.1 L1412.89 378.59 L1418.37 372.08 L1423.22 365.57 L1427.44 359.06 L1431.02 352.55 L1433.95 346.04 L1436.23 339.53 L1437.87 333.02 L1438.85 326.51 L1439.17 320 L1438.85 313.49 L1437.87 306.98 L1436.23 300.47 L1433.95 293.96 L1431.02 287.45 L1427.44 280.94 L1423.22 274.43 L1418.37 267.92 L1412.89 261.41 L1406.79 254.9 L1400.07 248.39 L1392.74 241.88 L1384.82 235.37 L1376.31 228.86 L1367.22 222.35 L1357.57 215.84 L1347.36 209.33 L1336.6 202.82 L1325.32 196.31 L1313.52 189.8 L1301.22 183.29 L1288.44 176.78 L1275.18 170.27 L1261.47 163.76 L1247.33 157.25 L1232.76 150.74 L1217.78 144.23 L1202.43 137.72 L1186.71 131.21 L1170.64 124.7 L1154.24 118.19 L1137.54 111.68 L1120.55 105.17 L1103.29 98.66 L1085.79 92.15 L1068.07 85.64 L1050.14 79.13 L1032.03 72.62 L1013.76 66.11 L995.36 59.6 L976.85 53.09 L958.24 46.58 L939.56 40.07 L920.84 33.56 L904.44 27.86" stroke-dashoffset="1"/>
<path d="M902.1 612.95 L922.55 606.44 L942.97 599.93 L963.34 593.42 L983.64 586.91 L1003.84 580.4 L1023.92 573.89 L1043.84 567.38 L1063.6 560.87 L1083.15 554.36 L1102.49 547.85 L1121.58 541.34 L1140.41 534.83 L1158.94 528.32 L1177.16 521.81 L1195.05 515.3 L1212.58 508.79 L1229.73 502.28 L1246.48 495.77 L1262.82 489.26 L1278.71 482.75 L1294.14 476.24 L1309.1 469.73 L1323.56 463.22 L1337.51 456.71 L1350.93 450.2 L1363.8 443.69 L1376.1 437.18 L1387.83 430.67 L1398.97 424.16 L1409.5 417.65 L1419.42 411.14 L1428.7 404.63 L1437.35 398.12 L1445.34 391.61 L1452.67 385.1 L1459.32 378.59 L1465.3 372.08 L1470.6 365.57 L1475.2 359.06 L1479.1 352.55 L1482.3 346.04 L1484.79 339.53 L1486.57 333.02 L1487.64 326.51 L1488 320 L1487.64 313.49 L1486.57 306.98 L1484.79 300.47 L1482.3 293.96 L1479.1 287.45 L1475.2 280.94 L1470.6 274.43 L1465.3 267.92 L1459.32 261.41 L1452.67 254.9 L1445.34 248.39 L1437.35 241.88 L1428.7 235.37 L1419.42 228.86 L1409.5 222.35 L1398.97 215.84 L1387.83 209.33 L1376.1 202.82 L1363.8 196.31 L1350.93 189.8 L1337.51 183.29 L1323.56 176.78 L1309.1 170.27 L1294.14 163.76 L1278.71 157.25 L1262.82 150.74 L1246.48 144.23 L1229.73 137.72 L1212.58 131.21 L1195.05 124.7 L1177.16 118.19 L1158.94 111.68 L1140.41 105.17 L1121.58 98.66 L1102.49 92.15 L1083.15 85.64 L1063.6 79.13 L1043.84 72.62 L1023.92 66.11 L1003.84 59.6 L983.64 53.09 L963.34 46.58 L942.97 40.07 L922.55 33.56 L904.66 27.86" stroke-dashoffset="1"/>
</g>
<g id="gridlabels">
<text x="901.8" y="329.6" font-family="DejaVu Sans, Liberation Sans, sans-serif" font-size="9.7" fill="#8a8a8a" text-anchor="middle">+0<tspan font-size="6.8" dy="-5.7" dx="0.5">∘</tspan></text>
<text x="804.15" y="329.6" font-family="DejaVu Sans, Liberation Sans, sans-serif" font-size="9.7" fill="#8a8a8a" text-anchor="middle">+30<tspan font-size="6.8" dy="-5.7" dx="0.5">∘</tspan></text>
<text x="706.5" y="329.6" font-family="DejaVu Sans, Liberation Sans, sans-serif" font-size="9.7" fill="#8a8a8a" text-anchor="middle">+60<tspan font-size="6.8" dy="-5.7" dx="0.5">∘</tspan></text>
<text x="608.85" y="329.6" font-family="DejaVu Sans, Liberation Sans, sans-serif" font-size="9.7" fill="#8a8a8a" text-anchor="middle">+90<tspan font-size="6.8" dy="-5.7" dx="0.5">∘</tspan></text>
<text x="511.2" y="329.6" font-family="DejaVu Sans, Liberation Sans, sans-serif" font-size="9.7" fill="#8a8a8a" text-anchor="middle">+120<tspan font-size="6.8" dy="-5.7" dx="0.5">∘</tspan></text>
<text x="413.55" y="329.6" font-family="DejaVu Sans, Liberation Sans, sans-serif" font-size="9.7" fill="#8a8a8a" text-anchor="middle">+150<tspan font-size="6.8" dy="-5.7" dx="0.5">∘</tspan></text>
<text x="315.9" y="329.6" font-family="DejaVu Sans, Liberation Sans, sans-serif" font-size="9.7" fill="#8a8a8a" text-anchor="middle">+180<tspan font-size="6.8" dy="-5.7" dx="0.5">∘</tspan></text>
<text x="1390.05" y="329.6" font-family="DejaVu Sans, Liberation Sans, sans-serif" font-size="9.7" fill="#8a8a8a" text-anchor="middle">+210<tspan font-size="6.8" dy="-5.7" dx="0.5">∘</tspan></text>
<text x="1292.4" y="329.6" font-family="DejaVu Sans, Liberation Sans, sans-serif" font-size="9.7" fill="#8a8a8a" text-anchor="middle">+240<tspan font-size="6.8" dy="-5.7" dx="0.5">∘</tspan></text>
<text x="1194.75" y="329.6" font-family="DejaVu Sans, Liberation Sans, sans-serif" font-size="9.7" fill="#8a8a8a" text-anchor="middle">+270<tspan font-size="6.8" dy="-5.7" dx="0.5">∘</tspan></text>
<text x="1097.1" y="329.6" font-family="DejaVu Sans, Liberation Sans, sans-serif" font-size="9.7" fill="#8a8a8a" text-anchor="middle">+300<tspan font-size="6.8" dy="-5.7" dx="0.5">∘</tspan></text>
<text x="999.45" y="329.6" font-family="DejaVu Sans, Liberation Sans, sans-serif" font-size="9.7" fill="#8a8a8a" text-anchor="middle">+330<tspan font-size="6.8" dy="-5.7" dx="0.5">∘</tspan></text>
<text x="1487.7" y="329.6" font-family="DejaVu Sans, Liberation Sans, sans-serif" font-size="9.7" fill="#8a8a8a" text-anchor="middle">+180<tspan font-size="6.8" dy="-5.7" dx="0.5">∘</tspan></text>
<text x="903" y="623.55" font-family="DejaVu Sans, Liberation Sans, sans-serif" font-size="9.7" fill="#8a8a8a" text-anchor="middle">−90<tspan font-size="6.8" dy="-5.7" dx="1.5">∘</tspan></text>
<text x="903" y="525.9" font-family="DejaVu Sans, Liberation Sans, sans-serif" font-size="9.7" fill="#8a8a8a" text-anchor="middle">−60<tspan font-size="6.8" dy="-5.7" dx="1.5">∘</tspan></text>
<text x="903" y="428.25" font-family="DejaVu Sans, Liberation Sans, sans-serif" font-size="9.7" fill="#8a8a8a" text-anchor="middle">−30<tspan font-size="6.8" dy="-5.7" dx="1.5">∘</tspan></text>
<text x="903" y="220.75" font-family="DejaVu Sans, Liberation Sans, sans-serif" font-size="9.7" fill="#8a8a8a" text-anchor="middle">+30<tspan font-size="6.8" dy="-5.7" dx="1.5">∘</tspan></text>
<text x="903" y="123.1" font-family="DejaVu Sans, Liberation Sans, sans-serif" font-size="9.7" fill="#8a8a8a" text-anchor="middle">+60<tspan font-size="6.8" dy="-5.7" dx="1.5">∘</tspan></text>
<text x="903" y="25.45" font-family="DejaVu Sans, Liberation Sans, sans-serif" font-size="9.7" fill="#8a8a8a" text-anchor="middle">+90<tspan font-size="6.8" dy="-5.7" dx="1.5">∘</tspan></text>
</g>
<g id="info" font-family="DejaVu Sans Mono, Liberation Mono, monospace" font-size="13.89" fill="#fff" xml:space="preserve">
<text x="316.1" y="29.7">UK003T</text>
<text x="316.1" y="42.82">Beg: 20251026 20:51:53 (sol = 213.34°)</text>
<text x="316.1" y="55.94">End: 20251027 05:18:13 (sol = 213.69°)</text>
<text x="316.1" y="69.06">--------------------------------------</text>
<text x="316.1" y="82.18">...: 11</text>
<text x="316.1" y="95.3">ORI: 11</text>
<text x="316.1" y="108.42">STA: 5</text>
<text x="316.1" y="121.54">CTA: 2</text>
<text x="316.1" y="134.66">LMI: 1</text>
<text x="316.1" y="147.78">LUM: 1</text>
<text x="316.1" y="160.9">OER: 1</text>
</g>
<g id="activity">
<g stroke="#fff" stroke-opacity="0.42" stroke-width="2.08" stroke-dasharray="2.08 3.44" fill="none">
<path d="M75 842.5 V641.5" stroke-dashoffset="-0.67"/>
<path d="M219 842.5 V641.5" stroke-dashoffset="-0.67"/>
<path d="M365 842.5 V641.5" stroke-dashoffset="-0.67"/>
<path d="M506 842.5 V641.5" stroke-dashoffset="-0.67"/>
<path d="M651 842.5 V641.5" stroke-dashoffset="-0.67"/>
<path d="M797 842.5 V641.5" stroke-dashoffset="-0.67"/>
<path d="M940 842.5 V641.5" stroke-dashoffset="-0.67"/>
<path d="M1090.75 842.5 V641.5" stroke-dashoffset="-0.67"/>
<path d="M1239 842.5 V641.5" stroke-dashoffset="-0.67"/>
<path d="M1394 842.5 V641.5" stroke-dashoffset="-0.67"/>
<path d="M1548 842.5 V641.5" stroke-dashoffset="-0.67"/>
<path d="M1687 842.5 V641.5" stroke-dashoffset="-0.67"/>
</g>
<g font-family="DejaVu Sans, Liberation Sans, sans-serif" font-size="27.78" fill="#505050" text-anchor="end" letter-spacing="-0.7">
<text transform="translate(149.07 643.8) rotate(-90)" x="0" y="0">APR</text>
<text transform="translate(294.9 645.9) rotate(-90)" x="0" y="0">MAY</text>
<text transform="translate(436 641) rotate(-90)" x="0" y="0">JUN</text>
<text transform="translate(577 642.2) rotate(-90)" x="0" y="0">JUL</text>
<text transform="translate(724 643) rotate(-90)" x="0" y="0">AUG</text>
<text transform="translate(872 645) rotate(-90)" x="0" y="0">SEP</text>
<text transform="translate(1017.6 644.5) rotate(-90)" x="0" y="0">OCT</text>
<text transform="translate(1170.4 645) rotate(-90)" x="0" y="0">NOV</text>
<text transform="translate(1319.6 645.1) rotate(-90)" x="0" y="0">DEC</text>
<text transform="translate(1469.6 641) rotate(-90)" x="0" y="0">JAN</text>
<text transform="translate(1628.4 646.2) rotate(-90)" x="0" y="0">FEB</text>
<text transform="translate(1766.4 645.6) rotate(-90)" x="0" y="0">MAR</text>
</g>
<g stroke="#c2df23" stroke-width="4.17" fill="none">
<path d="M106 834.4H130 M165 834.4H345 M366 834.4H625 M636 834.4H787 M807 834.4H900 M920 834.4H973 M984 834.4H1066 M1082 834.4H1204 M1244 834.4H1326 M1337 834.4H1356 M1381 834.4H1444 M1459 834.4H1512 M1523 834.4H1547 M1724 834.4H1747.7 M1758 834.4H1781.8"/>
</g>
<g stroke="#86d549" stroke-width="4.17" fill="none">
<path d="M165 818.1H188.75 M224 818.1H286.75 M312 818.1H340.75 M366 818.1H493 M508 818.1H654 M704 818.1H738 M773 818.1H846 M871 818.1H988 M1003 818.1H1017 M1062 818.1H1213 M1244 818.1H1267 M1293 818.1H1316 M1342 818.1H1365 M1386 818.1H1429 M1459 818.1H1483 M1548 818.1H1571"/>
</g>
<g stroke="#52c569" stroke-width="4.17" fill="none">
<path d="M165 801.9H188.75 M258 801.9H488 M508 801.9H615 M626 801.9H718 M729 801.9H826 M949 801.9H1150 M1160 801.9H1248 M1258 801.9H1444 M1459 801.9H1483 M1553 801.9H1576"/>
</g>
<g stroke="#2ab07f" stroke-width="4.17" fill="none">
<path d="M194 785H218 M322 785H507 M518 785H542 M557 785H684 M807 785H831 M954 785H973 M989 785H1125 M1155 785H1218 M1244 785H1267 M1317 785H1341 M1396 785H1419 M1464 785H1650"/>
</g>
<g stroke="#1e9b8a" stroke-width="4.17" fill="none">
<path d="M341 768.9H370 M410 768.9H448 M469 768.9H493 M528 768.9H546 M562 768.9H591 M616 768.9H649 M959 768.9H988 M1062 768.9H1086 M1101 768.9H1125 M1160 768.9H1194 M1249 768.9H1272 M1425 768.9H1512"/>
</g>
<g stroke="#25858e" stroke-width="4.17" fill="none">
<path d="M420 752H444 M533 752H556 M567 752H591 M621 752H743 M969 752H1135 M1185 752H1346 M1469 752H1493"/>
</g>
<g stroke="#2d708e" stroke-width="4.17" fill="none">
<path d="M430 735.8H453 M577 735.8H733 M994 735.8H1105 M1116 735.8H1223 M1263 735.8H1292 M1489 735.8H1512"/>
</g>
<g stroke="#38588c" stroke-width="4.17" fill="none">
<path d="M592 720H615 M655 720H772 M1072 720H1243 M1263 720H1287"/>
</g>
<g stroke="#433e85" stroke-width="4.17" fill="none">
<path d="M596 702.9H733 M1092 702.9H1120 M1200 702.9H1223 M1273 702.9H1326"/>
</g>
<g stroke="#482173" stroke-width="4.17" fill="none">
<path d="M1111 687H1135"/>
</g>
<g stroke="#fff" stroke-width="2.6" fill="none">
<path d="M113.6 834.4h8.3M117.75 830.25v8.3 M240.6 834.4h8.3M244.75 830.25v8.3 M510.35 834.4h8.3M514.5 830.25v8.3 M706.35 834.4h8.3M710.5 830.25v8.3 M833.35 834.4h8.3M837.5 830.25v8.3 M961.6 834.4h8.3M965.75 830.25v8.3 M986.6 834.4h8.3M990.75 830.25v8.3 M1116.6 834.4h8.3M1120.75 830.25v8.3 M1295.6 834.4h8.3M1299.75 830.25v8.3 M1341.85 834.4h8.3M1346 830.25v8.3 M1412.6 834.4h8.3M1416.75 830.25v8.3 M1481.6 834.4h8.3M1485.75 830.25v8.3 M1530.85 834.4h8.3M1535 830.25v8.3 M1731.45 834.4h8.3M1735.6 830.25v8.3 M1765.85 834.4h8.3M1770 830.25v8.3"/>
<path d="M172.6 818.1h8.3M176.75 813.95v8.3 M255.85 818.1h8.3M260 813.95v8.3 M323.6 818.1h8.3M327.75 813.95v8.3 M437.6 818.1h8.3M441.75 813.95v8.3 M598.6 818.1h8.3M602.75 813.95v8.3 M716.85 818.1h8.3M721 813.95v8.3 M793.6 818.1h8.3M797.75 813.95v8.3 M939.35 818.1h8.3M943.5 813.95v8.3 M1005.85 818.1h8.3M1010 813.95v8.3 M1152.6 818.1h8.3M1156.75 813.95v8.3 M1250.85 818.1h8.3M1255 813.95v8.3 M1299.85 818.1h8.3M1304 813.95v8.3 M1349.35 818.1h8.3M1353.5 813.95v8.3 M1402.6 818.1h8.3M1406.75 813.95v8.3 M1466.6 818.1h8.3M1470.75 813.95v8.3 M1554.85 818.1h8.3M1559 813.95v8.3"/>
<path d="M174.35 801.9h8.3M178.5 797.75v8.3 M378.6 801.9h8.3M382.75 797.75v8.3 M544.85 801.9h8.3M549 797.75v8.3 M682.6 801.9h8.3M686.75 797.75v8.3 M741.6 801.9h8.3M745.75 797.75v8.3 M1074.85 801.9h8.3M1079 797.75v8.3 M1216.6 801.9h8.3M1220.75 797.75v8.3 M1304.35 801.9h8.3M1308.5 797.75v8.3 M1466.6 801.9h8.3M1470.75 797.75v8.3 M1559.85 801.9h8.3M1564 797.75v8.3"/>
<path d="M201.6 785h8.3M205.75 780.85v8.3 M400.6 785h8.3M404.75 780.85v8.3 M525.35 785h8.3M529.5 780.85v8.3 M638.6 785h8.3M642.75 780.85v8.3 M814.6 785h8.3M818.75 780.85v8.3 M959.35 785h8.3M963.5 780.85v8.3 M1040.6 785h8.3M1044.75 780.85v8.3 M1187.6 785h8.3M1191.75 780.85v8.3 M1250.85 785h8.3M1255 780.85v8.3 M1324.35 785h8.3M1328.5 780.85v8.3 M1402.6 785h8.3M1406.75 780.85v8.3 M1545.6 785h8.3M1549.75 780.85v8.3"/>
<path d="M355.6 768.9h8.3M359.75 764.75v8.3 M426.45 768.9h8.3M430.6 764.75v8.3 M476.35 768.9h8.3M480.5 764.75v8.3 M535.6 768.9h8.3M539.75 764.75v8.3 M570.6 768.9h8.3M574.75 764.75v8.3 M630.35 768.9h8.3M634.5 764.75v8.3 M973.6 768.9h8.3M977.75 764.75v8.3 M1069.6 768.9h8.3M1073.75 764.75v8.3 M1108.6 768.9h8.3M1112.75 764.75v8.3 M1177.6 768.9h8.3M1181.75 764.75v8.3 M1255.35 768.9h8.3M1259.5 764.75v8.3 M1466.6 768.9h8.3M1470.75 764.75v8.3"/>
<path d="M427.6 752h8.3M431.75 747.85v8.3 M539.35 752h8.3M543.5 747.85v8.3 M574.35 752h8.3M578.5 747.85v8.3 M703.6 752h8.3M707.75 747.85v8.3 M1094.6 752h8.3M1098.75 747.85v8.3 M1270.6 752h8.3M1274.75 747.85v8.3 M1476.6 752h8.3M1480.75 747.85v8.3"/>
<path d="M437.6 735.8h8.3M441.75 731.65v8.3 M630.35 735.8h8.3M634.5 731.65v8.3 M1038.6 735.8h8.3M1042.75 731.65v8.3 M1167.6 735.8h8.3M1171.75 731.65v8.3 M1274.85 735.8h8.3M1279 731.65v8.3 M1496.6 735.8h8.3M1500.75 731.65v8.3"/>
<path d="M598.6 720h8.3M602.75 715.85v8.3 M726.6 720h8.3M730.75 715.85v8.3 M1187.6 720h8.3M1191.75 715.85v8.3 M1270.6 720h8.3M1274.75 715.85v8.3"/>
<path d="M687.6 702.9h8.3M691.75 698.75v8.3 M1101.85 702.9h8.3M1106 698.75v8.3 M1206.6 702.9h8.3M1210.75 698.75v8.3 M1299.85 702.9h8.3M1304 698.75v8.3"/>
<path d="M1118.6 687h8.3M1122.75 682.85v8.3"/>
</g>
<g font-family="DejaVu Sans, Liberation Sans, sans-serif" font-size="10.4" fill="#fff">
<text x="107.13" y="832">KSE</text>
<text x="244.31" y="832">ETA</text>
<text x="484.19" y="832">NZC</text>
<text x="698.68" y="832">NDA</text>
<text x="843.97" y="832">SPE</text>
<text x="935.39" y="832">ARD</text>
<text x="1014.02" y="832">EGE</text>
<text x="1131.21" y="832">NTA</text>
<text x="1272.33" y="832">MON</text>
<text x="1332.42" y="832">URS</text>
<text x="1401.31" y="832">AHY</text>
<text x="1473.69" y="832">GUM</text>
<text x="1523.82" y="832">OHY</text>
<text x="1725.22" y="832">XHE</text>
<text x="1761.42" y="832">EVI</text>
<text x="165.85" y="815">AVB</text>
<text x="244.92" y="815">ELY</text>
<text x="312.44" y="815">CAM</text>
<text x="421.45" y="815">SSG</text>
<text x="567.91" y="815">PCA</text>
<text x="709.6" y="815">AUD</text>
<text x="798.63" y="815">AUR</text>
<text x="919.88" y="815">DSX</text>
<text x="999.43" y="815">OCU</text>
<text x="1127.17" y="815">OER</text>
<text x="1243.38" y="815">DKD</text>
<text x="1292.67" y="815">DSV</text>
<text x="1343.32" y="815">ALY</text>
<text x="1400.39" y="815">JLE</text>
<text x="1461.18" y="815">SCC</text>
<text x="1548.7" y="815">FEV</text>
<text x="165.95" y="799">LYR</text>
<text x="363.7" y="799">JMC</text>
<text x="551.45" y="799">JPE</text>
<text x="660.94" y="799">PAU</text>
<text x="764.65" y="799">NIA</text>
<text x="1039.47" y="799">STA</text>
<text x="1194.21" y="799">NOO</text>
<text x="1341.41" y="799">COM</text>
<text x="1459.22" y="799">NCC</text>
<text x="1553.82" y="799">FED</text>
<text x="197.3" y="783">HVI</text>
<text x="403.77" y="783">ARI</text>
<text x="519.25" y="783">SZC</text>
<text x="608.26" y="783">CAP</text>
<text x="807.34" y="783">NUE</text>
<text x="949.89" y="783">OCT</text>
<text x="1049.78" y="783">ORI</text>
<text x="1174.51" y="783">AMO</text>
<text x="1244.5" y="783">DPC</text>
<text x="1320.5" y="783">XVI</text>
<text x="1396.09" y="783">QUA</text>
<text x="1549.37" y="783">AAN</text>
<text x="342.88" y="766">TAH</text>
<text x="423.54" y="766">JEA</text>
<text x="475.54" y="766">JIP</text>
<text x="529.01" y="766">PPS</text>
<text x="568.26" y="766">ZCS</text>
<text x="621.01" y="766">GDR</text>
<text x="959.66" y="766">DRA</text>
<text x="1062.31" y="766">LUM</text>
<text x="1102.09" y="766">RPU</text>
<text x="1166.91" y="766">THA</text>
<text x="1249" y="766">PSU</text>
<text x="1460.25" y="766">XCB</text>
<text x="423.57" y="750">JRC</text>
<text x="533.54" y="750">CAN</text>
<text x="567.56" y="750">FAN</text>
<text x="670.91" y="750">PER</text>
<text x="1039.49" y="750">CTA</text>
<text x="1254.01" y="750">HYD</text>
<text x="1469.8" y="750">XUM</text>
<text x="430.02" y="733">COR</text>
<text x="646.94" y="733">SDA</text>
<text x="1040.08" y="733">LMI</text>
<text x="1156.11" y="733">LEO</text>
<text x="1263.81" y="733">EHY</text>
<text x="1489.86" y="733">ECV</text>
<text x="595.36" y="717">JXA</text>
<text x="704.85" y="717">KCG</text>
<text x="1145.62" y="717">AND</text>
<text x="1263.03" y="717">DAD</text>
<text x="658.07" y="701">ERI</text>
<text x="1098.06" y="701">SLD</text>
<text x="1200.29" y="701">ORS</text>
<text x="1288.41" y="701">GEM</text>
<text x="1111.29" y="684">KUM</text>
</g>
<g stroke="#ff0000" stroke-width="1.4" stroke-dasharray="5.1 2.2" fill="none">
<path d="M1066.46 842.5V641.5"/>
<path d="M1068.17 842.5V641.5"/>
</g>
<rect x="20.5" y="641.5" width="1765" height="201" fill="none" stroke="#fff" stroke-width="1.11"/>
<g stroke="#fff" stroke-width="1.11">
<path d="M20.1 842.5v4.86"/>
<path d="M265.24 842.5v4.86"/>
<path d="M510.38 842.5v4.86"/>
<path d="M755.52 842.5v4.86"/>
<path d="M1000.66 842.5v4.86"/>
<path d="M1245.79 842.5v4.86"/>
<path d="M1490.93 842.5v4.86"/>
<path d="M1736.07 842.5v4.86"/>
</g>
<g font-family="DejaVu Sans, Liberation Sans, sans-serif" font-size="13.89" fill="#fff" text-anchor="middle">
<text x="20" y="861.8">0</text>
<text x="265.14" y="861.8">50</text>
<text x="510.28" y="861.8">100</text>
<text x="755.42" y="861.8">150</text>
<text x="1000.56" y="861.8">200</text>
<text x="1245.69" y="861.8">250</text>
<text x="1490.83" y="861.8">300</text>
<text x="1735.97" y="861.8">350</text>
<text x="902.4" y="881.5">Solar longitude (deg)</text>
</g>
</g>
<g id="sky" fill="none">
<g stroke-width="1.4" stroke-dasharray="1.39 2.29">
<path stroke="#52c569" d="M761.1 275.3 L761.4 273.7 L761.7 272.1 L762 270.4 L762.3 268.8 L762.6 267.2 L763 265.6 L763.3 263.9 L763.7 262.3 L764 260.7 L764.4 259.1 L764.8 257.4 L765.2 255.8 L765.6 254.2 L766 252.6 L766.5 251 L766.9 249.3 L767.4 247.7 L767.8 246.1 L768.3 244.5 L768.8 242.8 L769.3 241.2 L769.8 239.6 L770.3 238 L770.8 236.4 L771.3 234.7 L771.9 233.1 L772.4 231.5 L773 229.9 L773.6 228.2 L774.1 226.6 L774.7 225 L775.3 223.4 L775.9 221.7 L776.6 220.1 L777.2 218.5 L777.8 216.9 L778.5 215.3 L779.1 213.6 L779.8 212 L780.5 210.4 L781.2 208.8 L781.9 207.1 L782.6 205.5 L783.3 203.9 L784 202.3 L784.7 200.7 L785.5 199 L786.2 197.4 L787 195.8 L787.7 194.2 L788.5 192.5 L789.3 190.9 L790.1 189.3 L790.9 187.7 L791.7 186.1 L792.5 184.4 L793.3 182.8 L794.2 181.2 L795 179.6 L795.9 177.9 L796.7 176.3 L797.6 174.7 L798.4 173.1 L799.3 171.4 L800.2 169.8 L801.1 168.2 L802 166.6 L802.9 165 L803.8 163.3 L804.8 161.7 L805.7 160.1 L806.6 158.5 L807.6 156.8 L808.6 155.2 L809.5 153.6 L810.5 152 L811.5 150.4 L812.4 148.7 L813.4 147.1 L814.4 145.5 L815.4 143.9 L816.4 142.2 L817.5 140.6 L818.5 139 L819.5 137.4 L820.6 135.8 L821.6 134.1 L822.6 132.5 L823.7 130.9 L824.8 129.3 L825.8 127.6 L826.9 126 L828 124.4 L829.1 122.8 L830.1 121.1 L831.2 119.5 L832.3 117.9 L833.4 116.3 L834.5 114.7 L835.7 113 L836.8 111.4 L837.9 109.8 L839 108.2 L840.2 106.5 L841.3 104.9 L842.5 103.3 L843.6 101.7 L844.8 100.1 L845.9 98.4 L847.1 96.8 L848.2 95.2 L849.4 93.6 L850.6 92 L851.8 90.3 L852.9 88.7 L854.1 87.1 L855.3 85.5 L856.5 83.8 L857.7 82.2 L858.9 80.6 L860.1 79 L861.3 77.4 L862.5 75.7 L863.7 74.1 L864.9 72.5 L866.1 70.9 L867.4 69.3 L868.6 67.6 L869.8 66 L871 64.4 L872.3 62.8 L873.5 61.2 L874.7 59.5 L875.9 57.9 L877.2 56.3 L878.4 54.7 L879.7 53.1 L880.9 51.5 L882.1 49.8 L883.4 48.2 L884.6 46.6 L885.8 45 L887.1 43.4 L888.3 41.8 L889.5 40.2 L890.8 38.6 L892 37 L893.2 35.4 L894.4 33.9 L895.5 32.4 L896.5 31 L897.1 29.9 L896.5 29.4 L893.5 29.9 M914.2 31.1 L917.5 32.5 L921 34 L924.6 35.6 L928.3 37.1 L932 38.7 L935.8 40.3"/>
<path stroke="#2ab07f" d="M590.7 270.7 L591.7 269.1 L592.6 267.5 L593.6 265.9 L594.7 264.3 L595.7 262.7 L596.8 261.1 L597.9 259.5 L599 257.9 L600.2 256.3 L601.3 254.7 L602.5 253.1 L603.7 251.5 L604.9 249.9 L606.2 248.3 L607.5 246.7 L608.8 245 L610.1 243.4 L611.4 241.8 L612.8 240.2 L614.2 238.6 L615.6 237 L617 235.4 L618.4 233.8 L619.9 232.2 L621.4 230.6 L622.9 229 L624.4 227.4 L626 225.8 L627.5 224.2 L629.1 222.6 L630.7 221 L632.4 219.4 L634 217.8 L635.7 216.2 L637.4 214.6 L639.1 213 L640.8 211.4 L642.5 209.8 L644.3 208.2 L646.1 206.6 L647.9 205 L649.7 203.4 L651.5 201.8 L653.4 200.3 L655.2 198.7 L657.1 197.1 L659 195.5 L661 193.9 L662.9 192.3 L664.9 190.7 L666.8 189.1 L668.8 187.5 L670.8 185.9 L672.9 184.3 L674.9 182.7 L677 181.1 L679 179.5 L681.1 177.9 L683.2 176.3 L685.4 174.7 L687.5 173.2 L689.6 171.6 L691.8 170 L694 168.4 L696.2 166.8 L698.4 165.2 L700.6 163.6 L702.9 162 L705.1 160.5 L707.4 158.9 L709.6 157.3 L711.9 155.7 L714.2 154.1 L716.6 152.5 L718.9 151 L721.2 149.4 L723.6 147.8 L725.9 146.2 L728.3 144.6 L730.7 143.1 L733.1 141.5 L735.5 139.9 L737.9 138.3 L740.3 136.8 L742.8 135.2 L745.2 133.6 L747.7 132.1 L750.2 130.5 L752.6 128.9 L755.1 127.4 L757.6 125.8 L760.1 124.2 L762.6 122.7 L765.1 121.1 L767.7 119.6 L770.2 118 L772.7 116.5 L775.3 114.9 L777.8 113.4 L780.4 111.8 L782.9 110.3 L785.5 108.7 L788 107.2 L790.6 105.7 L793.2 104.1 L795.7 102.6 L798.3 101.1 L800.9 99.6 L803.5 98.1 L806.1 96.6 L808.6 95 L811.2 93.6 L813.8 92.1 L816.4 90.6 L818.9 89.1 L821.5 87.6 L824.1 86.1 L826.6 84.7 L829.2 83.2 L831.7 81.8 L834.3 80.4 L836.8 78.9 L839.3 77.5 L841.8 76.1 L844.3 74.8 L846.8 73.4 L849.2 72 L851.7 70.7 L854.1 69.4 L856.5 68.1 L858.9 66.8 L861.2 65.6 L863.6 64.4 L865.9 63.2 L868.1 62 L870.3 60.9 L872.5 59.9 L874.7 58.8 L876.8 57.9 L878.9 56.9 L880.9 56.1 L882.8 55.3 L884.8 54.6 L886.6 53.9 L888.4 53.4 L890.2 52.9 L892 52.5 L893.7 52.3 L895.3 52.1 L897 52 L898.6 52.1 L900.2 52.2 L901.8 52.4 L903.3 52.8 L904.9 53.2 L906.5 53.7 L908.2 54.4 L909.8 55 L911.5 55.8 L913.1 56.6 L914.8 57.5 L916.6 58.5 L918.3 59.5"/>
<path stroke="#25858e" d="M745.5 240.5 L746 238.9 L746.5 237.3 L747 235.6 L747.6 234 L748.1 232.4 L748.7 230.8 L749.3 229.2 L749.8 227.6 L750.4 225.9 L751 224.3 L751.7 222.7 L752.3 221.1 L752.9 219.5 L753.6 217.8 L754.2 216.2 L754.9 214.6 L755.6 213 L756.3 211.4 L757 209.8 L757.7 208.1 L758.5 206.5 L759.2 204.9 L759.9 203.3 L760.7 201.7 L761.5 200.1 L762.3 198.4 L763 196.8 L763.9 195.2 L764.7 193.6 L765.5 192 L766.3 190.4 L767.2 188.7 L768 187.1 L768.9 185.5 L769.8 183.9 L770.6 182.3 L771.5 180.7 L772.4 179 L773.3 177.4 L774.3 175.8 L775.2 174.2 L776.1 172.6 L777.1 171 L778.1 169.3 L779 167.7 L780 166.1 L781 164.5 L782 162.9 L783 161.3 L784 159.7 L785 158 L786.1 156.4 L787.1 154.8 L788.1 153.2 L789.2 151.6 L790.3 150 L791.3 148.4 L792.4 146.8 L793.5 145.1 L794.6 143.5 L795.7 141.9 L796.8 140.3 L797.9 138.7 L799.1 137.1 L800.2 135.5 L801.4 133.9 L802.5 132.3 L803.7 130.6 L804.8 129 L806 127.4 L807.2 125.8 L808.4 124.2 L809.5 122.6 L810.7 121 L811.9 119.4 L813.2 117.8 L814.4 116.2 L815.6 114.6 L816.8 113 L818.1 111.4 L819.3 109.8 L820.5 108.2 L821.8 106.6 L823 105 L824.3 103.4 L825.6 101.8 L826.8 100.2 L828.1 98.6 L829.4 97 L830.7 95.4 L832 93.8 L833.2 92.2 L834.5 90.6 L835.8 89 L837.1 87.4 L838.4 85.8 L839.7 84.3 L841 82.7 L842.4 81.1 L843.7 79.5 L845 77.9 L846.3 76.4 L847.6 74.8 L848.9 73.3 L850.2 71.7 L851.5 70.1 L852.8 68.6 L854.1 67.1 L855.4 65.5 L856.7 64 L858 62.5 L859.3 61 L860.6 59.5 L861.8 58 L863 56.5 L864.3 55 L865.5 53.6 L866.6 52.2 L867.7 50.8 L868.8 49.5 L869.9 48.1 L870.8 46.9 L871.7 45.6 L872.5 44.5 L873.1 43.4 L873.6 42.4 L873.9 41.6 L873.9 40.8 L873.5 40.3 L872.8 39.9 L871.6 39.7 L869.9 39.7 L867.7 40 L865 40.4 L861.8 41 L858.2 41.7 L854.1 42.6 M953.7 43.6 L955.8 44.7"/>
<path stroke="#52c569" d="M761.1 275.3 L761.9 273.7 L762.6 272.2 L763.4 270.7 L764.2 269.1 L765 267.6 L765.9 266 L766.7 264.5 L767.5 262.9 L768.4 261.4 L769.2 259.8 L770.1 258.3 L771 256.7 L771.8 255.2 L772.7 253.6 L773.6 252.1 L774.5 250.5 L775.4 249 L776.4 247.5 L777.3 245.9 L778.2 244.4 L779.2 242.8 L780.1 241.3 L781.1 239.7 L782.1 238.2 L783.1 236.7 L784.1 235.1 L785 233.6 L786.1 232.1 L787.1 230.5 L788.1 229 L789.1 227.5 L790.1 225.9 L791.2 224.4 L792.2 222.9 L793.3 221.3 L794.4 219.8 L795.4 218.3 L796.5 216.7 L797.6 215.2 L798.7 213.7 L799.8 212.2 L800.9 210.6 L802 209.1 L803.1 207.6 L804.2 206.1 L805.4 204.5 L806.5 203 L807.6 201.5 L808.8 200 L809.9 198.5 L811.1 197 L812.2 195.5 L813.4 193.9 L814.6 192.4 L815.8 190.9 L817 189.4 L818.1 187.9 L819.3 186.4 L820.5 184.9 L821.7 183.4 L822.9 181.9 L824.2 180.4 L825.4 178.9 L826.6 177.5 L827.8 176 L829 174.5 L830.3 173 L831.5 171.5 L832.7 170 L834 168.6 L835.2 167.1 L836.5 165.6 L837.7 164.1 L839 162.7 L840.2 161.2 L841.5 159.8 L842.8 158.3 L844 156.8 L845.3 155.4 L846.6 153.9 L847.8 152.5 L849.1 151.1 L850.4 149.6 L851.6 148.2 L852.9 146.8 L854.2 145.3 L855.5 143.9 L856.8 142.5 L858 141.1 L859.3 139.7 L860.6 138.3 L861.9 136.9 L863.2 135.5 L864.5 134.1 L865.7 132.8 L867 131.4 L868.3 130 L869.6 128.7 L870.9 127.3 L872.2 126 L873.5 124.7 L874.7 123.3 L876 122 L877.3 120.7 L878.7 119.6 L880.1 118.4 L881.5 117.3 L882.9 116.2 L884.3 115.1 L885.7 114 L887.1 112.9 L888.4 111.9 L889.8 110.9 L891.2 109.9 L892.6 108.9 L894 107.9 L895.3 106.9 L896.7 106 L898.1 105.1 L899.5 104.2 L900.8 103.3 L902.2 102.4 L903.6 101.6 L905 100.8 L906.3 100 L907.7 99.3 L909.1 98.6 L910.5 97.9 L911.8 97.2 L913.2 96.5 L914.6 95.9 L916 95.4 L917.4 94.8 L918.8 94.3 L920.2 93.8 L921.7 93.4 L923.1 93 L924.6 92.6 L926 92.2 L927.5 91.9 L929 91.7 L930.5 91.4 L932 91.3 L933.5 91.1 L935.1 91 L936.6 90.9 L938.2 90.9 L939.8 90.9 L941.5 90.9 L943.1 91 L944.8 91.1 L946.5 91.3 L948.2 91.5 L950 91.7"/>
<path stroke="#2ab07f" d="M586.2 267.6 L587.8 266.2 L589.3 264.9 L590.9 263.5 L592.5 262.2 L594.1 260.8 L595.8 259.4 L597.4 258.1 L599.1 256.7 L600.8 255.4 L602.5 254 L604.2 252.7 L605.9 251.3 L607.6 250 L609.4 248.6 L611.1 247.3 L612.9 246 L614.7 244.6 L616.5 243.3 L618.3 242 L620.2 240.6 L622 239.3 L623.9 238 L625.8 236.6 L627.6 235.3 L629.5 234 L631.5 232.7 L633.4 231.4 L635.3 230.1 L637.2 228.7 L639.2 227.4 L641.2 226.1 L643.1 224.8 L645.1 223.5 L647.1 222.2 L649.1 220.9 L651.1 219.6 L653.2 218.4 L655.2 217.1 L657.2 215.8 L659.3 214.5 L661.4 213.2 L663.4 212 L665.5 210.7 L667.6 209.4 L669.7 208.2 L671.8 206.9 L673.9 205.7 L676 204.4 L678.1 203.2 L680.3 201.9 L682.4 200.7 L684.5 199.5 L686.7 198.2 L688.8 197 L691 195.8 L693.1 194.6 L695.3 193.4 L697.5 192.2 L699.6 191 L701.8 189.8 L704 188.6 L706.2 187.4 L708.4 186.2 L710.5 185.1 L712.7 183.9 L714.9 182.7 L717.1 181.6 L719.3 180.5 L721.5 179.3 L723.7 178.2 L725.9 177.1 L728.1 175.9 L730.3 174.8 L732.5 173.7 L734.6 172.6 L736.8 171.5 L739 170.5 L741.2 169.4 L743.4 168.3 L745.6 167.3 L747.7 166.2 L749.9 165.2 L752.1 164.2 L754.3 163.2 L756.4 162.2 L758.6 161.2 L760.7 160.2 L762.9 159.2 L765 158.2 L767.2 157.3 L769.3 156.3 L771.4 155.4 L773.5 154.5 L775.7 153.6 L777.8 152.7 L779.9 151.8 L781.9 150.9 L784 150 L786.1 149.2 L788.2 148.4 L790.2 147.5 L792.3 146.7 L794.3 145.9 L796.3 145.2 L798.3 144.4 L800.4 143.7 L802.4 142.9 L804.3 142.2 L806.3 141.5 L808.3 140.8 L810.2 140.2 L812.2 139.5 L814.1 138.9 L816 138.3 L818 137.7 L819.9 137.1 L821.7 136.5 L823.6 136 L825.5 135.5 L827.3 135 L829.2 134.5 L831 134 L832.8 133.6 L834.6 133.2 L836.4 132.8 L838.2 132.4 L840 132 L841.8 131.7 L843.5 131.4 L845.3 131.1 L847 130.8 L848.7 130.5 L850.4 130.3 L852.1 130.1 L853.8 129.9 L855.5 129.8 L857.2 129.6 L858.8 129.5 L860.5 129.4 L862.1 129.4 L863.8 129.3 L865.4 129.3 L867 129.3 L868.6 129.3 L870.2 129.4 L871.8 129.4 L873.4 129.5 L875 129.6 L876.6 129.8 L878.2 129.9 L879.8 130.1 L881.3 130.3 L882.9 130.5 L884.5 130.8 L886 131.1 L887.6 131.4 L889.1 131.7 L890.7 132 L892.3 132.4 L893.8 132.8 L895.3 133.2 L896.9 133.6 L898.4 134 L900 134.5 L901.5 135 L903.1 135.5 L904.6 136 L906.2 136.5 L907.7 137.1 L909.2 137.7 L910.8 138.3 L912.3 138.9 L913.9 139.5 L915.4 140.2 L917 140.8 L918.5 141.5 L920.1 142.2 L921.7 142.9 L923.2 143.7 L924.8 144.4 L926.3 145.2 L927.9 145.9 L929.5 146.7 L931.1 147.5 L932.6 148.4 L934.2 149.2"/>
<path stroke="#2ab07f" d="M609.8 271.1 L610.1 269.5 L610.4 267.9 L610.8 266.4 L611.1 264.8 L611.5 263.2 L611.9 261.6 L612.3 260 L612.8 258.4 L613.3 256.9 L613.7 255.3 L614.3 253.7 L614.8 252.1 L615.3 250.5 L615.9 249 L616.5 247.4 L617.1 245.8 L617.7 244.2 L618.4 242.7 L619.1 241.1 L619.8 239.5 L620.5 237.9 L621.2 236.3 L621.9 234.8 L622.7 233.2 L623.5 231.6 L624.3 230 L625.1 228.5 L626 226.9 L626.9 225.3 L627.7 223.8 L628.6 222.2 L629.6 220.6 L630.5 219 L631.5 217.5 L632.5 215.9 L633.5 214.3 L634.5 212.8 L635.5 211.2 L636.6 209.6 L637.6 208.1 L638.7 206.5 L639.8 204.9 L641 203.4 L642.1 201.8 L643.3 200.2 L644.4 198.7 L645.6 197.1 L646.9 195.6 L648.1 194 L649.3 192.4 L650.6 190.9 L651.9 189.3 L653.2 187.8 L654.5 186.2 L655.8 184.7 L657.1 183.1 L658.5 181.6 L659.9 180 L661.3 178.5 L662.7 176.9 L664.1 175.4 L665.5 173.8 L667 172.3 L668.4 170.7 L669.9 169.2 L671.4 167.7 L672.9 166.1 L674.4 164.6 L676 163.1 L677.5 161.5 L679.1 160 L680.6 158.5 L682.2 156.9 L683.8 155.4 L685.4 153.9 L687 152.4 L688.6 150.9 L690.3 149.3 L691.9 147.8 L693.6 146.3 L695.2 144.8 L696.9 143.3 L698.6 141.8 L700.3 140.3 L702 138.8 L703.7 137.3 L705.4 135.8 L707.1 134.3 L708.9 132.9 L710.6 131.4 L712.4 129.9 L714.1 128.4 L715.9 127 L717.6 125.5 L719.4 124 L721.1 122.6 L722.9 121.1 L724.6 119.7 L726.4 118.3 L728.2 116.8 L729.9 115.4 L731.7 114 L733.5 112.6 L735.2 111.2 L737 109.8 L738.7 108.4 L740.4 107 L742.2 105.7 L743.9 104.3 L745.6 103 L747.3 101.6 L749 100.3 L750.6 99 L752.3 97.7 L753.9 96.4 L755.5 95.1 L757.1 93.8 L758.7 92.6 L760.2 91.4 L761.7 90.1 L763.2 88.9 L764.6 87.8 L766 86.6 L767.4 85.5 L768.7 84.4 L770 83.3 L771.2 82.2 L772.3 81.2 L773.4 80.2 L774.4 79.2 L775.4 78.2 L776.2 77.3 L777 76.5 L777.7 75.6 L778.3 74.8 L778.8 74.1 L779.1 73.4 L779.4 72.7 L779.5 72.1 L779.5 71.5 L779.4 71 L779.1 70.5 L778.7 70.1 L778.1 69.8 L777.3 69.5 L776.4 69.3 L775.2 69.1 L773.9 69 L772.5 68.9 M1031.8 68.9 L1030.4 69 L1029.2 69.2 L1028.2 69.4 L1027.3 69.6 L1026.6 69.9 L1026.1 70.3 L1025.8 70.7 L1025.6 71.2 L1025.5 71.8 L1025.6 72.4 L1025.8 73 L1026.1 73.7 L1026.5 74.4 L1027.1 75.2 L1027.7 76 L1028.5 76.9 L1029.3 77.8 L1030.2 78.7 L1031.2 79.6 L1032.3 80.6 L1033.4 81.7 L1034.6 82.7 L1035.9 83.8 L1037.2 84.9 L1038.5 86 L1039.9 87.2 L1041.4 88.3 L1042.8 89.5 L1044.3 90.7 L1045.9 91.9 L1047.5 93.2 L1049.1 94.4 L1050.7 95.7 L1052.3 97 L1054 98.3 L1055.7 99.6 L1057.4 100.9 L1059.1 102.3 L1060.8 103.6 L1062.5 105 L1064.3 106.3 L1066 107.7 L1067.8 109.1 L1069.6 110.5 L1071.4 111.9 L1073.1 113.3 L1074.9 114.7 L1076.7 116.1 L1078.5 117.5 L1080.3 119 L1082.1 120.4 L1083.9 121.8 L1085.6 123.3 L1087.4 124.7 L1089.2 126.2"/>
<path stroke="#52c569" d="M761.1 275.3 L761.6 273.7 L762.1 272.1 L762.6 270.5 L763.1 268.9 L763.6 267.2 L764.1 265.6 L764.7 264 L765.2 262.4 L765.8 260.8 L766.3 259.2 L766.9 257.6 L767.5 256 L768.1 254.3 L768.7 252.7 L769.4 251.1 L770 249.5 L770.6 247.9 L771.3 246.3 L771.9 244.7 L772.6 243.1 L773.3 241.5 L774 239.8 L774.7 238.2 L775.4 236.6 L776.1 235 L776.8 233.4 L777.6 231.8 L778.3 230.2 L779.1 228.6 L779.8 227 L780.6 225.3 L781.4 223.7 L782.2 222.1 L783 220.5 L783.8 218.9 L784.6 217.3 L785.4 215.7 L786.3 214.1 L787.1 212.5 L788 210.9 L788.8 209.2 L789.7 207.6 L790.6 206 L791.4 204.4 L792.3 202.8 L793.2 201.2 L794.2 199.6 L795.1 198 L796 196.4 L796.9 194.8 L797.9 193.2 L798.8 191.6 L799.8 190 L800.7 188.3 L801.7 186.7 L802.7 185.1 L803.7 183.5 L804.7 181.9 L805.7 180.3 L806.7 178.7 L807.7 177.1 L808.7 175.5 L809.7 173.9 L810.8 172.3 L811.8 170.7 L812.9 169.1 L813.9 167.5 L815 165.9 L816 164.3 L817.1 162.7 L818.2 161.1 L819.3 159.5 L820.4 157.9 L821.5 156.3 L822.6 154.7 L823.7 153.1 L824.8 151.5 L825.9 149.9 L827 148.3 L828.2 146.7 L829.3 145.1 L830.4 143.5 L831.6 141.9 L832.7 140.3 L833.9 138.7 L835 137.1 L836.2 135.5 L837.4 133.9 L838.5 132.3 L839.7 130.8 L840.9 129.2 L842.1 127.6 L843.3 126 L844.4 124.4 L845.6 122.8 L846.8 121.2 L848 119.6 L849.2 118.1 L850.5 116.5 L851.7 114.9 L852.9 113.3 L854.1 111.8 L855.3 110.2 L856.5 108.6 L857.8 107 L859 105.5 L860.2 103.9 L861.4 102.3 L862.7 100.8 L863.9 99.2 L865.1 97.7 L866.4 96.1 L867.6 94.6 L868.8 93 L870.1 91.5 L871.3 89.9 L872.6 88.4 L873.8 86.9 L875 85.3 L876.3 83.8 L877.5 82.3 L878.7 80.8 L880 79.3 L881.2 77.8 L882.4 76.3 L883.7 74.8 L884.9 73.3 L886.1 71.9 L887.3 70.4 L888.6 69 L889.8 67.6 L891 66.1 L892.2 64.8 L893.4 63.4 L894.6 62 L895.8 60.7 L897 59.4 L898.2 58.1 L899.3 56.9 L900.5 55.7 L901.7 54.5 L902.9 53.4 L904 52.3 L905.2 51.4 L906.4 50.4 L907.6 49.6 L908.8 48.8 L910.1 48.2 L911.4 47.6 L912.7 47.2 L914.1 46.9 L915.6 46.7 L917.2 46.6 L918.9 46.7 L920.7 46.9 L922.6 47.2 L924.7 47.7 L926.8 48.3 L929.1 49 L931.5 49.7 L934 50.6 L936.6 51.5 L939.3 52.5 L942.1 53.6 L945 54.7 L947.9 55.9 L951 57.1 L954 58.3 L957.1 59.6 L960.3 60.9 L963.5 62.3 L966.7 63.6 L970 65 L973.3 66.4 L976.7 67.8 L980 69.2 L983.4 70.7 L986.8 72.1 L990.2 73.6 L993.6 75.1 L997 76.5 L1000.4 78 L1003.9 79.5 L1007.3 81 L1010.8 82.6 L1014.2 84.1 L1017.7 85.6 L1021.2 87.1 L1024.6 88.7 L1028.1 90.2 L1031.6 91.7 L1035 93.3 L1038.5 94.8 L1041.9 96.4 L1045.4 97.9 L1048.8 99.5 L1052.3 101.1 L1055.7 102.6 L1059.2 104.2 L1062.6 105.7 L1066 107.3 L1069.4 108.9 L1072.8 110.5 L1076.2 112 L1079.6 113.6 L1082.9 115.2 L1086.3 116.8 L1089.7 118.3 L1093 119.9 L1096.3 121.5 L1099.6 123.1 L1102.9 124.7 L1106.2 126.3 L1109.5 127.9 L1112.8 129.4 L1116 131 L1119.3 132.6 L1122.5 134.2 L1125.7 135.8 L1128.9 137.4"/>
<path stroke="#2d708e" d="M426 219.5 L426.7 218.3 L427.3 217.2 L428 216 L428.7 214.9 L429.5 213.7 L430.2 212.6 L430.9 211.4 L431.7 210.3 L432.4 209.2 L433.2 208 L434 206.9 L434.7 205.8 L435.5 204.7 L436.3 203.6 L437.1 202.5 L437.9 201.4 L438.7 200.3 L439.6 199.2 L440.4 198.2 L441.2 197.1 L442 196 M1361.1 195 L1357.8 193.9 L1354.5 192.9 L1351.2 191.8 L1347.9 190.8 L1344.6 189.8 L1341.3 188.8 L1338.1 187.8 L1334.8 186.8 L1331.5 185.8 L1328.2 184.8 L1324.9 183.8 L1321.7 182.8 L1318.4 181.9 L1315.2 180.9 L1311.9 180 L1308.7 179 L1305.4 178.1 L1302.2 177.2 L1299 176.3 L1295.8 175.4 L1292.6 174.5 L1289.4 173.6 L1286.2 172.7 L1283.1 171.8 L1279.9 171 L1276.8 170.1 L1273.7 169.3 L1270.6 168.5 L1267.5 167.7 L1264.4 166.9 L1261.3 166.1 L1258.3 165.3 L1255.3 164.6 L1252.3 163.8 L1249.3 163.1 L1246.4 162.3 L1243.4 161.6 L1240.5 160.9 L1237.6 160.2 L1234.8 159.6 L1231.9 158.9 L1229.1 158.3 L1226.3 157.6 L1223.5 157 L1220.8 156.4 L1218.1 155.8 L1215.4 155.2 L1212.7 154.7 L1210.1 154.1 L1207.5 153.6 L1204.9 153.1 L1202.3 152.6 L1199.8 152.1 L1197.3 151.6 L1194.9 151.2 L1192.5 150.8 L1190.1 150.3 L1187.7 149.9 L1185.4 149.6 L1183.1 149.2 L1180.8 148.8 L1178.6 148.5 L1176.4 148.2 L1174.2 147.9 L1172.1 147.6 L1170 147.4 L1168 147.1 L1165.9 146.9 L1164 146.7 L1162 146.5"/>
<path stroke="#1e9b8a" d="M538 169.5 L539 168.4 L539.9 167.4 L540.8 166.4 L541.8 165.3 L542.7 164.3 L543.6 163.3 L544.5 162.3 L545.4 161.3 L546.3 160.3 L547.2 159.3 L548 158.4 L548.9 157.4 L549.7 156.5 L550.5 155.6 L551.3 154.6 L552.1 153.7 L552.8 152.8 L553.6 151.9 L554.3 151.1 L555 150.2 L555.6 149.4 L556.3 148.5 L556.9 147.7 L557.5 146.9 L558.1 146.1 L558.6 145.3 L559.1 144.6 L559.6 143.8 M1243 143.1 L1239.7 142.4 L1236.5 141.7 L1233.3 141 L1230.1 140.3 L1227 139.7 L1223.9 139 L1220.9 138.4 L1217.9 137.8 L1214.9 137.2 L1212 136.6 L1209.1 136.1 L1206.3 135.6 L1203.5 135 L1200.7 134.6 L1198 134.1 L1195.4 133.6 L1192.8 133.2 L1190.2 132.8 L1187.7 132.4 L1185.2 132 L1182.8 131.7 L1180.5 131.3 L1178.2 131 L1175.9 130.7 L1173.7 130.5 L1171.5 130.2 L1169.4 130 L1167.3 129.8 L1165.3 129.6 L1163.4 129.5 L1161.5 129.3 L1159.6 129.2 L1157.8 129.1 L1156.1 129.1 L1154.4 129 L1152.7 129 L1151.1 129"/>
<path stroke="#2ab07f" d="M598.7 265.3 L598.7 263.9 L598.6 262.4 L598.6 261 L598.6 259.6 L598.6 258.1 L598.7 256.7 L598.7 255.3 L598.8 253.8 L598.9 252.4 L599 251 L599.1 249.6 L599.3 248.1 L599.4 246.7 L599.6 245.3 L599.8 243.9 L600 242.5 L600.2 241 L600.5 239.6 L600.7 238.2 L601 236.8 L601.3 235.4 L601.6 234 L601.9 232.6 L602.3 231.2 L602.6 229.8 L603 228.4 L603.4 227 L603.8 225.6 L604.2 224.2 L604.6 222.8 L605.1 221.4 L605.5 220 L606 218.6 L606.5 217.2 L607 215.9 L607.5 214.5 L608 213.1 L608.5 211.7 L609.1 210.4 L609.7 209 L610.2 207.6 L610.8 206.3 L611.4 204.9 L612 203.5 L612.7 202.2 L613.3 200.8 L614 199.5 L614.6 198.2 L615.3 196.8 L616 195.5 L616.7 194.1 L617.4 192.8 L618.1 191.5 L618.8 190.2 L619.5 188.8 L620.3 187.5 L621 186.2 L621.8 184.9 L622.5 183.6 L623.3 182.3 L624.1 181 L624.9 179.7 L625.7 178.5 L626.5 177.2 L627.3 175.9 L628.1 174.7 L628.9 173.4 L629.7 172.1 L630.5 170.9 L631.3 169.7 L632.1 168.4 L633 167.2 L633.8 166 L634.6 164.7 L635.5 163.5 L636.3 162.3 L637.1 161.1 L637.9 160 L638.8 158.8 L639.6 157.6 L640.4 156.4 L641.2 155.3 L642 154.1 L642.8 153 L643.6 151.9 L644.4 150.8 L645.2 149.6 L646 148.5 L646.8 147.5 L647.5 146.4 L648.3 145.3 L649 144.2 L649.7 143.2 L650.4 142.2 L651.1 141.1 L651.8 140.1 L652.4 139.1 L653.1 138.1 L653.7 137.2 L654.3 136.2 L654.9 135.3 L655.4 134.3 L655.9 133.4 L656.4 132.5 L656.9 131.7 L657.4 130.8 L657.8 129.9 L658.2 129.1 L658.5 128.3 L658.9 127.5 L659.1 126.7 L659.4 125.9 L659.6 125.2 L659.8 124.5 L659.9 123.8 L660 123.1 L660 122.4 L660 121.8 L660 121.2 L659.9 120.6 L659.7 120 L659.5 119.4 L659.3 118.9 L659 118.4 L658.6 117.9 L658.2 117.5 L657.7 117 L657.1 116.6 L656.5 116.2 L655.9 115.9 L655.1 115.5 L654.3 115.2 L653.4 115 L652.5 114.7 L651.4 114.5 L650.3 114.3 L649.2 114.1 L647.9 114 L646.6 113.9 L645.2 113.8 L643.7 113.7 L642.2 113.7 L640.6 113.7 M1164.2 113.7 L1162.7 113.8 L1161.3 113.9 L1160 114 L1158.8 114.2 L1157.6 114.3 L1156.6 114.5 L1155.6 114.7 L1154.6 115 L1153.8 115.3 L1153 115.6 L1152.3 115.9 L1151.6 116.3 L1151 116.7 L1150.5 117.1 L1150 117.5 L1149.6 118 L1149.3 118.5 L1149 119 L1148.8 119.5 L1148.6 120.1 L1148.5 120.6 L1148.4 121.2 L1148.4 121.9 L1148.4 122.5 L1148.5 123.2 L1148.6 123.9 L1148.8 124.6 L1149 125.3 L1149.2 126 L1149.5 126.8 L1149.9 127.6 L1150.2 128.4 L1150.6 129.2 L1151 130 L1151.5 130.9 L1152 131.8 L1152.5 132.7 L1153 133.6 L1153.6 134.5 L1154.2 135.4"/>
<path stroke="#25858e" d="M725.6 242.1 L726.1 240.5 L726.6 238.9 L727.1 237.3 L727.6 235.7 L728.2 234.1 L728.7 232.5 L729.3 230.9 L729.8 229.3 L730.4 227.7 L731 226.1 L731.6 224.5 L732.3 222.9 L732.9 221.3 L733.6 219.7 L734.2 218.1 L734.9 216.5 L735.6 214.9 L736.3 213.3 L737 211.7 L737.7 210.1 L738.4 208.5 L739.2 206.9 L740 205.3 L740.7 203.7 L741.5 202.1 L742.3 200.5 L743.1 198.9 L743.9 197.3 L744.7 195.7 L745.6 194.1 L746.4 192.5 L747.3 190.9 L748.2 189.3 L749.1 187.7 L750 186.1 L750.9 184.5 L751.8 182.9 L752.7 181.3 L753.7 179.7 L754.6 178.2 L755.6 176.6 L756.5 175 L757.5 173.4 L758.5 171.8 L759.5 170.2 L760.5 168.6 L761.5 167 L762.6 165.4 L763.6 163.8 L764.7 162.2 L765.7 160.6 L766.8 159 L767.9 157.5 L769 155.9 L770.1 154.3 L771.2 152.7 L772.3 151.1 L773.4 149.5 L774.6 147.9 L775.7 146.3 L776.8 144.8 L778 143.2 L779.2 141.6 L780.4 140 L781.5 138.4 L782.7 136.8 L783.9 135.3 L785.1 133.7 L786.4 132.1 L787.6 130.5 L788.8 128.9 L790 127.4 L791.3 125.8 L792.5 124.2 L793.8 122.6 L795.1 121.1 L796.3 119.5 L797.6 117.9 L798.9 116.4 L800.2 114.8 L801.5 113.2 L802.8 111.7 L804.1 110.1 L805.4 108.6 L806.7 107 L808 105.4 L809.3 103.9 L810.7 102.3 L812 100.8 L813.3 99.2 L814.6 97.7 L816 96.2 L817.3 94.6 L818.7 93.1 L820 91.6 L821.3 90 L822.7 88.5 L824 87 L825.4 85.5 L826.7 84 L827.8 82.6 L828.9 81.1 L830 79.7 L831.1 78.3 L832.2 76.9 L833.2 75.5 L834.2 74.1 L835.3 72.8 L836.2 71.5 L837.2 70.1 L838.2 68.9 L839.1 67.6 L839.9 66.3 L840.8 65.1 L841.5 64 L842.3 62.8 L842.9 61.7 L843.5 60.6 L844 59.6 L844.5 58.6 L844.8 57.7 L845 56.9 L845.1 56.1 L845.1 55.3 L844.9 54.7 L844.6 54.1 L844 53.7 L843.3 53.3 L842.3 53 L841.2 52.8 L839.8 52.7 L838.1 52.7 L836.2 52.8 L834 53.1 L831.6 53.4 L828.9 53.8 L826 54.3 L822.8 54.9 L819.4 55.5 L815.8 56.3 L812 57.1 L808 58 L803.9 58.9 L799.6 59.9 M1006.7 60.9 L1008.7 62 L1010.9 63.1 L1013.2 64.3 L1015.6 65.5 L1018 66.7 L1020.6 67.9 L1023.2 69.2 L1025.9 70.5 L1028.6 71.8 L1031.3 73.2 L1034.2 74.5 L1037 75.9 L1039.9 77.3 L1042.8 78.7 L1045.7 80.1 L1048.7 81.5 L1051.6 83 L1054.6 84.4 L1057.6 85.9 L1060.7 87.3 L1063.7 88.8 L1066.7 90.3 L1069.8 91.7 L1072.8 93.2 L1075.9 94.7 L1078.9 96.2 L1082 97.7 L1085 99.3 L1088.1 100.8 L1091.1 102.3 L1094.2 103.8 L1097.2 105.4 L1100.3 106.9 L1103.3 108.4 L1106.3 110 L1109.4 111.5 L1112.4 113.1 L1115.4 114.6 L1118.4 116.2 L1121.4 117.7 L1124.3 119.3 L1127.3 120.8 L1130.3 122.4 L1133.2 123.9 L1136.1 125.5 L1139 127.1 L1142 128.6 L1144.8 130.2 L1147.7 131.8 L1150.6 133.4 L1153.4 134.9 L1156.3 136.5 L1159.1 138.1 L1161.9 139.7 L1164.7 141.2 L1167.4 142.8 L1170.2 144.4"/>
<path stroke="#2ab07f" d="M595.6 262.7 L595.4 261.3 L595.3 260 L595.1 258.6 L595 257.3 L594.9 255.9 L594.8 254.6 L594.7 253.2 L594.6 251.9 L594.6 250.6 L594.6 249.2 L594.5 247.9 L594.5 246.5 L594.5 245.2 L594.6 243.9 L594.6 242.5 L594.6 241.2 L594.7 239.9 L594.8 238.6 L594.9 237.2 L595 235.9 L595.1 234.6 L595.2 233.3 L595.4 232 L595.5 230.7 L595.7 229.3 L595.9 228 L596.1 226.7 L596.3 225.4 L596.5 224.1 L596.8 222.8 L597 221.6 L597.3 220.3 L597.5 219 L597.8 217.7 L598.1 216.4 L598.4 215.1 L598.7 213.9 L599.1 212.6 L599.4 211.3 L599.7 210.1 L600.1 208.8 L600.5 207.6 L600.8 206.3 L601.2 205.1 L601.6 203.8 L602 202.6 L602.4 201.3 L602.8 200.1 L603.2 198.9 L603.7 197.7 L604.1 196.4 L604.6 195.2 L605 194 L605.5 192.8 L605.9 191.6 L606.4 190.4 L606.9 189.3 L607.3 188.1 L607.8 186.9 L608.3 185.7 L608.8 184.6 L609.3 183.4 L609.8 182.3 L610.3 181.1 L610.8 180 L611.3 178.8 L611.8 177.7 L612.3 176.6 L612.8 175.5 L613.3 174.4 L613.7 173.3 L614.2 172.2 L614.7 171.1 L615.2 170.1 L615.7 169 L616.2 167.9 L616.7 166.9 L617.1 165.9 L617.6 164.8 L618 163.8 L618.5 162.8 L618.9 161.8 L619.4 160.8 L619.8 159.8 L620.2 158.9 L620.6 157.9 L621 157 L621.3 156 L621.7 155.1 L622 154.2 L622.4 153.3 L622.7 152.4 L623 151.5 L623.3 150.7 L623.5 149.8 L623.8 149 L624 148.1 L624.2 147.3 L624.3 146.5 L624.5 145.8 L624.6 145 L624.7 144.2 L624.8 143.5 L624.8 142.8 L624.8 142.1 L624.8 141.4 L624.8 140.7 L624.7 140.1 L624.6 139.4 L624.4 138.8 L624.3 138.2 L624.1 137.6 L623.8 137 L623.5 136.5 L623.2 136 L622.8 135.4 L622.4 134.9 L621.9 134.5 L621.4 134 L620.9 133.6 L620.3 133.2 L619.6 132.8 L618.9 132.4 L618.2 132.1 L617.4 131.7 L616.5 131.4 L615.7 131.1 L614.7 130.9 L613.7 130.6 L612.6 130.4 L611.5 130.2 L610.4 130.1 L609.1 129.9 L607.8 129.8 L606.5 129.7 L605.1 129.6 L603.6 129.5 L602.1 129.5 L600.5 129.5 L598.9 129.5 L597.2 129.5 M1207.6 129.6 L1206.2 129.6 L1204.9 129.8 L1203.6 129.9 L1202.3 130 L1201.2 130.2 L1200.1 130.4 L1199 130.6 L1198 130.8 L1197.1 131.1 L1196.2 131.4 L1195.3 131.7 L1194.6 132 L1193.8 132.3 L1193.1 132.7 L1192.5 133.1 L1191.9 133.5 L1191.4 133.9 L1190.9 134.4 L1190.5 134.8 L1190.1 135.3 L1189.7 135.8 L1189.4 136.4 L1189.2 136.9 L1189 137.5 L1188.8 138.1 L1188.6 138.7 L1188.5 139.3 L1188.4 139.9 L1188.4 140.6 L1188.4 141.2 L1188.4 141.9 L1188.5 142.6 L1188.6 143.3 L1188.7 144.1 L1188.8 144.8 L1189 145.6 L1189.2 146.4 L1189.4 147.2 L1189.7 148 L1189.9 148.8 L1190.2 149.6 L1190.5 150.5 L1190.9 151.3 L1191.2 152.2"/>
<path stroke="#2ab07f" d="M597 268 L596.6 266.7 L596.2 265.4 L595.9 264.2 L595.5 262.9 L595.2 261.6 L594.9 260.4 L594.6 259.1 L594.3 257.8 L594 256.6 L593.8 255.3 L593.5 254 L593.3 252.8 L593 251.5 L592.8 250.3 L592.6 249 L592.4 247.8 L592.3 246.5 L592.1 245.3 L592 244 L591.8 242.8 L591.7 241.5 L591.6 240.3 L591.5 239.1 L591.4 237.8 L591.3 236.6 L591.2 235.4 L591.2 234.2 L591.1 232.9 L591.1 231.7 L591 230.5 L591 229.3 L591 228.1 L591 226.9 L591 225.7 L591.1 224.5 L591.1 223.3 L591.1 222.1 L591.2 220.9 L591.2 219.8 L591.3 218.6 L591.4 217.4 L591.5 216.2 L591.6 215.1 L591.6 213.9 L591.8 212.8 L591.9 211.6 L592 210.5 L592.1 209.3 L592.2 208.2 L592.4 207.1 L592.5 205.9 L592.7 204.8 L592.8 203.7 L593 202.6 L593.2 201.5 L593.3 200.4 L593.5 199.3 L593.7 198.2 L593.8 197.1 L594 196 L594.2 195 L594.4 193.9 L594.6 192.8 L594.8 191.8 L595 190.7 L595.1 189.7 L595.3 188.7 L595.5 187.6 L595.7 186.6 L595.9 185.6 L596.1 184.6 L596.2 183.6 L596.4 182.6 L596.6 181.6 L596.8 180.7 L596.9 179.7 L597.1 178.8 L597.2 177.8 L597.4 176.9 L597.5 176 L597.7 175 L597.8 174.1 L597.9 173.2 L598 172.3 L598.1 171.5 L598.2 170.6 L598.3 169.7 L598.4 168.9 L598.4 168.1 L598.5 167.2 L598.5 166.4 L598.5 165.6 L598.5 164.8 L598.5 164 L598.4 163.3 L598.4 162.5 L598.3 161.8 L598.2 161 L598.1 160.3 L598 159.6 L597.9 158.9 L597.7 158.2 L597.5 157.6 L597.3 156.9 L597.1 156.3 L596.8 155.7 L596.5 155.1 L596.2 154.5 L595.8 153.9 L595.5 153.3 L595.1 152.8 L594.7 152.2 L594.2 151.7 L593.7 151.2 L593.2 150.7 L592.6 150.3 L592 149.8 L591.4 149.4 L590.8 149 L590.1 148.6 L589.3 148.2 L588.6 147.8 L587.8 147.5 L586.9 147.1 L586 146.8 L585.1 146.5 L584.1 146.3 L583.1 146 L582.1 145.8 L581 145.6 L579.9 145.4 L578.7 145.2 L577.5 145 L576.2 144.9 L574.9 144.7 L573.5 144.6 L572.1 144.5 L570.7 144.5 L569.2 144.4 L567.6 144.4 L566 144.4 L564.4 144.4 L562.7 144.4 L561 144.5 L559.2 144.5 L557.4 144.6 M1246.8 144.7 L1245.5 144.9 L1244.2 145 L1243 145.2 L1241.9 145.3 L1240.8 145.5 L1239.7 145.8 L1238.7 146 L1237.7 146.3 L1236.8 146.5 L1235.9 146.8 L1235 147.1 L1234.2 147.5 L1233.5 147.8 L1232.7 148.2 L1232 148.6 L1231.4 149 L1230.8 149.4 L1230.2 149.8 L1229.7 150.3 L1229.2 150.7 L1228.7 151.2 L1228.3 151.7"/>
<path stroke="#2ab07f" d="M594 264 L593.6 262.8 L593.2 261.5 L592.8 260.3 L592.4 259.1 L592.1 257.8 L591.7 256.6 L591.4 255.4 L591.1 254.2 L590.7 253 L590.4 251.8 L590.2 250.5 L589.9 249.3 L589.6 248.1 L589.4 246.9 L589.1 245.7 L588.9 244.5 L588.7 243.3 L588.4 242.1 L588.2 240.9 L588.1 239.7 L587.9 238.6 L587.7 237.4 L587.5 236.2 L587.4 235 L587.3 233.8 L587.1 232.7 L587 231.5 L586.9 230.3 L586.8 229.2 L586.7 228 L586.6 226.9 L586.5 225.7 L586.5 224.6 L586.4 223.4 L586.4 222.3 L586.3 221.2 L586.3 220 L586.2 218.9 L586.2 217.8 L586.2 216.7 L586.2 215.6 L586.2 214.5 L586.2 213.4 L586.2 212.3 L586.2 211.2 L586.2 210.1 L586.3 209 L586.3 207.9 L586.3 206.9 L586.4 205.8 L586.4 204.8 L586.4 203.7 L586.5 202.7 L586.5 201.6 L586.6 200.6 L586.6 199.6 L586.7 198.5 L586.7 197.5 L586.8 196.5 L586.8 195.5 L586.9 194.5 L587 193.5 L587 192.5 L587.1 191.6 L587.1 190.6 L587.2 189.6 L587.2 188.7 L587.2 187.7 L587.3 186.8 L587.3 185.9 L587.3 185 L587.4 184.1 L587.4 183.2 L587.4 182.3 L587.4 181.4 L587.4 180.5 L587.4 179.6 L587.4 178.8 L587.4 177.9 L587.3 177.1 L587.3 176.3 L587.2 175.5 L587.1 174.7 L587.1 173.9 L587 173.1 L586.9 172.3 L586.8 171.5 L586.6 170.8 L586.5 170 L586.3 169.3 L586.1 168.6 L585.9 167.9 L585.7 167.2 L585.5 166.5 L585.3 165.9 L585 165.2 L584.7 164.6 L584.4 163.9 L584.1 163.3 L583.7 162.7 L583.3 162.1 L582.9 161.5 L582.5 161 L582 160.4 L581.6 159.9 L581.1 159.4 L580.5 158.9 L580 158.4 L579.4 157.9 L578.8 157.5 L578.1 157 L577.5 156.6 L576.7 156.2 L576 155.8 L575.2 155.4 L574.4 155.1 L573.6 154.7 L572.7 154.4 L571.8 154.1 L570.9 153.8 L569.9 153.5 L568.9 153.2 L567.8 153 L566.7 152.8 L565.6 152.6 L564.4 152.4 L563.2 152.2 L562 152 L560.7 151.9 L559.3 151.8 L558 151.7 L556.6 151.6 L555.1 151.5 L553.6 151.4 L552.1 151.4 L550.5 151.4 L548.9 151.4 L547.2 151.4 L545.5 151.5 L543.7 151.5 L541.9 151.6 L540.1 151.7 M1264.8 151.8 L1263.5 151.9 L1262.2 152.1 L1261 152.2 L1259.8 152.4 L1258.7 152.6 L1257.6 152.8 L1256.6 153 L1255.5 153.3 L1254.6 153.6 L1253.6 153.8 L1252.7 154.1 L1251.9 154.5 L1251.1 154.8 L1250.3 155.1 L1249.5 155.5 L1248.8 155.9 L1248.1 156.3 L1247.5 156.7"/>
<path stroke="#2ab07f" d="M592 266 L591.5 264.8 L591 263.6 L590.5 262.4 L590 261.3 L589.5 260.1 L589.1 258.9 L588.6 257.7 L588.2 256.5 L587.8 255.4 L587.4 254.2 L587 253 L586.6 251.9 L586.2 250.7 L585.8 249.5 L585.5 248.4 L585.1 247.2 L584.8 246.1 L584.5 244.9 L584.1 243.8 L583.8 242.7 L583.5 241.5 L583.2 240.4 L583 239.3 L582.7 238.1 L582.4 237 L582.2 235.9 L581.9 234.8 L581.7 233.6 L581.4 232.5 L581.2 231.4 L581 230.3 L580.8 229.2 L580.6 228.1 L580.4 227 L580.2 226 L580 224.9 L579.9 223.8 L579.7 222.7 L579.5 221.7 L579.4 220.6 L579.2 219.5 L579.1 218.5 L579 217.4 L578.8 216.4 L578.7 215.4 L578.6 214.3 L578.4 213.3 L578.3 212.3 L578.2 211.3 L578.1 210.3 L578 209.2 L577.9 208.3 L577.8 207.3 L577.7 206.3 L577.6 205.3 L577.5 204.3 L577.4 203.4 L577.3 202.4 L577.2 201.4 L577.1 200.5 L577 199.6 L576.9 198.6 L576.8 197.7 L576.7 196.8 L576.6 195.9 L576.4 195 L576.3 194.1 L576.2 193.2 L576.1 192.3 L576 191.4 L575.8 190.6 L575.7 189.7 L575.5 188.9 L575.4 188 L575.2 187.2 L575.1 186.4 L574.9 185.6 L574.7 184.8 L574.5 184 L574.3 183.2 L574.1 182.4 L573.9 181.7 L573.7 180.9 L573.4 180.2 L573.2 179.5 L572.9 178.8 L572.6 178 L572.3 177.4 L572 176.7 L571.7 176 L571.4 175.3 L571 174.7 L570.6 174 L570.2 173.4 L569.8 172.8 L569.4 172.2 L569 171.6 L568.5 171 L568 170.5 L567.5 169.9 L567 169.4 L566.4 168.9 L565.8 168.3 L565.3 167.8 L564.6 167.4 L564 166.9 L563.3 166.4 L562.6 166 L561.9 165.6 L561.1 165.2 L560.4 164.8 L559.6 164.4 L558.7 164 L557.9 163.6 L557 163.3 L556.1 163 L555.1 162.7 L554.1 162.4 L553.1 162.1 L552 161.8 L551 161.6 L549.8 161.4 L548.7 161.1 L547.5 160.9 L546.3 160.8 L545 160.6 L543.8 160.4 L542.4 160.3 L541.1 160.2 L539.7 160.1 L538.2 160 L536.8 159.9 L535.3 159.9 L533.7 159.8 L532.1 159.8 L530.5 159.8 L528.9 159.8 L527.2 159.9 L525.4 159.9 L523.7 160 L521.9 160.1 L520 160.1 M1285.7 160.3 L1284.4 160.4 L1283.1 160.5 L1281.9 160.7 L1280.7 160.9 L1279.5 161.1 L1278.4 161.3 L1277.3 161.5 L1276.2 161.7 L1275.2 162 L1274.2 162.3 L1273.2 162.5 L1272.3 162.9 L1271.4 163.2 L1270.6 163.5 L1269.7 163.9 L1269 164.2 L1268.2 164.6 L1267.5 165 L1266.8 165.4 L1266.1 165.8 L1265.4 166.3 L1264.8 166.7 L1264.2 167.2 L1263.7 167.6 L1263.1 168.1 L1262.6 168.6 L1262.1 169.2 L1261.7 169.7 L1261.2 170.2 L1260.8 170.8"/>
<path stroke="#2ab07f" d="M578.4 271.6 L577.5 270.7 L576.6 269.7 L575.8 268.8 L574.9 267.8 L574.1 266.9 L573.2 266 L572.4 265.1 L571.5 264.1 L570.7 263.2 L569.9 262.3 L569.1 261.4 L568.3 260.5 L567.5 259.6 L566.7 258.7 L565.9 257.8 L565.1 256.9 L564.3 256 L563.5 255.1 L562.8 254.2 L562 253.3 L561.3 252.4 L560.5 251.6 L559.7 250.7 L559 249.8 L558.3 249 L557.5 248.1 L556.8 247.2 L556.1 246.4 L555.3 245.5 L554.6 244.7 L553.9 243.9 L553.2 243 L552.5 242.2 L551.8 241.4 L551.1 240.6 L550.4 239.7 L549.7 238.9 L549 238.1 L548.3 237.3 L547.6 236.5 L546.9 235.7 L546.2 235 L545.5 234.2 L544.8 233.4 L544.2 232.6 L543.5 231.9 L542.8 231.1 L542.1 230.4 L541.4 229.6 L540.7 228.9 L540.1 228.1 L539.4 227.4 L538.7 226.7 L538 226 L537.3 225.3 L536.6 224.6 L535.9 223.9 L535.2 223.2 L534.5 222.5 L533.8 221.8 L533.1 221.1 L532.4 220.5 L531.7 219.8 L531 219.2 L530.3 218.5 L529.6 217.9 L528.8 217.3 L528.1 216.6 L527.4 216 L526.6 215.4 L525.9 214.8 L525.1 214.2 L524.4 213.7 L523.6 213.1 L522.8 212.5 L522 212 L521.2 211.4 L520.5 210.9 L519.6 210.3 L518.8 209.8 L518 209.3 L517.2 208.8 L516.3 208.3 L515.5 207.8 L514.6 207.3 L513.8 206.8 L512.9 206.4 L512 205.9 L511.1 205.5 L510.2 205 L509.3 204.6 L508.3 204.2 L507.4 203.8 L506.4 203.4 L505.4 203 L504.4 202.6 L503.4 202.2 L502.4 201.9 L501.4 201.5 L500.4 201.2 L499.3 200.9 L498.2 200.5 L497.1 200.2 L496 199.9 L494.9 199.6 L493.8 199.3 L492.6 199.1 L491.5 198.8 L490.3 198.6 L489.1 198.3 L487.8 198.1 L486.6 197.9 L485.4 197.7 L484.1 197.5 L482.8 197.3 L481.5 197.1 L480.2 197 L478.8 196.8 L477.4 196.7 L476.1 196.5 L474.7 196.4 L473.2 196.3 L471.8 196.2 L470.3 196.1 L468.9 196 L467.4 196 L465.8 195.9 L464.3 195.9 L462.7 195.9 L461.1 195.8 L459.5 195.8 L457.9 195.8 L456.3 195.8 L454.6 195.9 L452.9 195.9 L451.2 195.9 L449.5 196 L447.7 196.1 L446 196.1 L444.2 196.2 L442.4 196.3 L440.5 196.4 M1363.1 196.6 L1361.7 196.7"/>
<path stroke="#52c569" d="M761.1 275.3 L760.4 274 L759.7 272.6 L759.1 271.3 L758.4 270 L757.8 268.7 L757.1 267.3 L756.5 266 L755.8 264.7 L755.2 263.4 L754.6 262 L754 260.7 L753.4 259.4 L752.8 258.1 L752.2 256.8 L751.6 255.5 L751 254.2 L750.4 252.8 L749.9 251.5 L749.3 250.2 L748.8 248.9 L748.2 247.6 L747.7 246.3 L747.1 245 L746.6 243.7 L746.1 242.4 L745.6 241.2 L745.1 239.9 L744.6 238.6 L744.1 237.3 L743.6 236 L743.1 234.8 L742.7 233.5 L742.2 232.2 L741.7 230.9 L741.3 229.7 L740.8 228.4 L740.4 227.2 L739.9 225.9 L739.5 224.6 L739.1 223.4 L738.7 222.1 L738.3 220.9 L737.8 219.7 L737.4 218.4 L737 217.2 L736.7 216 L736.3 214.7 L735.9 213.5 L735.5 212.3 L735.1 211.1 L734.8 209.9 L734.4 208.7 L734 207.5 L733.7 206.3 L733.3 205.1 L733 203.9 L732.6 202.7 L732.3 201.5 L732 200.4 L731.6 199.2 L731.3 198 L731 196.9 L730.7 195.7 L730.3 194.6 L730 193.5 L729.7 192.3 L729.4 191.2 L729.1 190.1 L728.7 189 L728.4 187.8 L728.1 186.7 L727.8 185.7 L727.5 184.6 L727.2 183.5 L726.9 182.4 L726.6 181.3 L726.3 180.3 L725.9 179.2 L725.6 178.2 L725.3 177.2 L725 176.1 L724.7 175.1 L724.3 174.1 L724 173.1 L723.7 172.1 L723.4 171.1 L723 170.1 L722.7 169.2 L722.3 168.2 L722 167.3 L721.6 166.3 L721.2 165.4 L720.9 164.5 L720.5 163.6 L720.1 162.7 L719.7 161.8 L719.3 160.9 L718.9 160.1 L718.5 159.2 L718 158.4 L717.6 157.6 L717.1 156.8 L716.7 156 L716.2 155.2 L715.7 154.4 L715.2 153.7 L714.7 152.9 L714.1 152.2 L713.6 151.5 L713 150.8 L712.4 150.1 L711.8 149.4 L711.2 148.8 L710.6 148.1 L709.9 147.5 L709.3 146.9 L708.6 146.3 L707.8 145.7 L707.1 145.2 L706.3 144.6 L705.6 144.1 L704.7 143.6 L703.9 143.1 L703.1 142.7 L702.2 142.2 L701.3 141.8 L700.3 141.4 L699.3 141 L698.3 140.6 L697.3 140.2 L696.3 139.9 L695.2 139.6 L694 139.3 L692.9 139 L691.7 138.8 L690.5 138.5 L689.2 138.3 L688 138.1 L686.6 137.9 L685.3 137.8 L683.9 137.6 L682.5 137.5 L681 137.4 L679.5 137.4 L678 137.3 L676.4 137.3 L674.8 137.3 L673.1 137.3 L671.4 137.3 L669.7 137.4 L667.9 137.5 L666.1 137.6 L664.3 137.7 L662.4 137.8 L660.4 138 L658.5 138.2 L656.5 138.4 L654.4 138.6 L652.3 138.9 L650.2 139.1 L648 139.4 L645.8 139.7 L643.6 140 L641.3 140.4 L639 140.7 L636.6 141.1 L634.2 141.5 L631.8 141.9 L629.3 142.4 L626.8 142.8 L624.3 143.3 L621.7 143.8 L619.1 144.3 L616.5 144.9 L613.8 145.4 L611.1 146 L608.3 146.5 L605.6 147.1 L602.8 147.8 L599.9 148.4 L597 149 L594.1 149.7 L591.2 150.4 L588.3 151.1 L585.3 151.8 L582.3 152.5 L579.2 153.2 L576.2 154 L573.1 154.7 L570 155.5 L566.9 156.3 L563.7 157.1 L560.5 157.9 L557.3 158.7 L554.1 159.6 L550.9 160.4 L547.6 161.3 L544.4 162.2 L541.1 163 L537.8 163.9 L534.5 164.9 L531.1 165.8 L527.8 166.7"/>
<path stroke="#2ab07f" d="M593 269 L592.5 267.8 L592 266.6 L591.5 265.4 L591 264.2 L590.5 263 L590 261.8 L589.6 260.7 L589.2 259.5 L588.7 258.3 L588.3 257.1 L587.9 255.9 L587.5 254.8 L587.1 253.6 L586.7 252.4 L586.4 251.3 L586 250.1 L585.7 248.9 L585.4 247.8 L585 246.6 L584.7 245.5 L584.4 244.3 L584.1 243.2 L583.8 242 L583.6 240.9 L583.3 239.8 L583.1 238.6 L582.8 237.5 L582.6 236.4 L582.4 235.2 L582.1 234.1 L581.9 233 L581.7 231.9 L581.5 230.8 L581.3 229.7 L581.2 228.6 L581 227.5 L580.8 226.4 L580.7 225.3 L580.5 224.2 L580.4 223.1 L580.3 222.1 L580.1 221 L580 219.9 L579.9 218.9 L579.8 217.8 L579.7 216.7 L579.6 215.7 L579.5 214.7 L579.4 213.6 L579.3 212.6 L579.2 211.6 L579.1 210.5 L579 209.5 L578.9 208.5 L578.9 207.5 L578.8 206.5 L578.7 205.5 L578.7 204.5 L578.6 203.6 L578.5 202.6 L578.5 201.6 L578.4 200.7 L578.3 199.7 L578.3 198.8 L578.2 197.8 L578.1 196.9 L578.1 196 L578 195 L577.9 194.1 L577.8 193.2 L577.7 192.3 L577.7 191.4 L577.6 190.6 L577.5 189.7 L577.4 188.8 L577.3 188 L577.2 187.1 L577 186.3 L576.9 185.5 L576.8 184.7 L576.6 183.9 L576.5 183.1 L576.3 182.3 L576.2 181.5 L576 180.7 L575.8 180 L575.6 179.2 L575.4 178.5 L575.1 177.7 L574.9 177 L574.7 176.3 L574.4 175.6 L574.1 174.9 L573.8 174.3 L573.5 173.6 L573.2 172.9 L572.8 172.3 L572.5 171.7 L572.1 171.1 L571.7 170.5 L571.3 169.9 L570.8 169.3 L570.4 168.7 L569.9 168.2 L569.4 167.6 L568.8 167.1 L568.3 166.6 L567.7 166.1 L567.1 165.6 L566.5 165.2 L565.8 164.7 L565.2 164.3 L564.5 163.8 L563.7 163.4 L563 163 L562.2 162.6 L561.4 162.3 L560.5 161.9 L559.7 161.6 L558.7 161.3 L557.8 160.9 L556.8 160.7 L555.8 160.4 L554.8 160.1 L553.7 159.9 L552.6 159.6 L551.5 159.4 L550.3 159.2 L549.1 159 L547.9 158.9 L546.6 158.7 L545.3 158.6"/>
<path stroke="#2ab07f" d="M598.7 265.3 L598.5 263.9 L598.3 262.6 L598.1 261.2 L598 259.9 L597.8 258.5 L597.7 257.2 L597.6 255.8 L597.5 254.5 L597.4 253.1 L597.3 251.8 L597.3 250.5 L597.3 249.1 L597.2 247.8 L597.2 246.4 L597.2 245.1 L597.2 243.8 L597.3 242.4 L597.3 241.1 L597.4 239.8 L597.5 238.5 L597.5 237.1 L597.6 235.8 L597.8 234.5 L597.9 233.2 L598 231.9 L598.2 230.6 L598.4 229.3 L598.5 228 L598.7 226.7 L598.9 225.4 L599.2 224.1 L599.4 222.8 L599.6 221.5 L599.9 220.2 L600.1 218.9 L600.4 217.6 L600.7 216.3 L601 215.1 L601.3 213.8 L601.6 212.5 L602 211.3 L602.3 210 L602.6 208.7 L603 207.5 L603.4 206.2 L603.8 205 L604.1 203.7 L604.5 202.5 L604.9 201.3 L605.3 200 L605.8 198.8 L606.2 197.6 L606.6 196.4 L607.1 195.2 L607.5 193.9 L607.9 192.7 L608.4 191.6 L608.9 190.4 L609.3 189.2 L609.8 188 L610.3 186.8 L610.8 185.6 L611.2 184.5 L611.7 183.3 L612.2 182.2 L612.7 181 L613.2 179.9 L613.7 178.8 L614.2 177.6 L614.7 176.5 L615.2 175.4 L615.7 174.3 L616.1 173.2 L616.6 172.1 L617.1 171 L617.6 170 L618.1 168.9 L618.6 167.8 L619 166.8 L619.5 165.8 L619.9 164.7 L620.4 163.7 L620.8 162.7 L621.3 161.7 L621.7 160.7 L622.1 159.7 L622.5 158.8 L622.9 157.8 L623.3 156.8 L623.7 155.9 L624 155 L624.4 154.1 L624.7 153.2 L625 152.3 L625.3 151.4 L625.6 150.5 L625.9 149.7 L626.1 148.8 L626.3 148 L626.5 147.2 L626.7 146.4 L626.8 145.6 L627 144.8 L627.1 144.1 L627.2 143.3 L627.2 142.6"/>
<path stroke="#c3e022" d="M769.5 323.2 L769 321.7 L768.5 320.1 L768 318.6 L767.5 317 L767.1 315.5 L766.6 313.9 L766.1 312.4 L765.7 310.9 L765.3 309.3 L764.8 307.8 L764.4 306.2 L764 304.7 L763.6 303.1 L763.2 301.6 L762.9 300.1 L762.5 298.5 L762.1 297 L761.8 295.4 L761.5 293.9 L761.1 292.3 L760.8 290.8 L760.5 289.3 L760.2 287.7 L759.9 286.2 L759.6 284.6 L759.4 283.1 L759.1 281.6 L758.8 280 L758.6 278.5 L758.4 276.9 L758.1 275.4 L757.9 273.9 L757.7 272.3 L757.5 270.8 L757.4 269.2 L757.2 267.7 L757 266.2 L756.9 264.6 L756.7 263.1 L756.6 261.6 L756.5 260 L756.3 258.5 L756.2 257 L756.1 255.4 L756.1 253.9 L756 252.4 L755.9 250.8 L755.9 249.3 L755.8 247.8 L755.8 246.2 L755.7 244.7 L755.7 243.2 L755.7 241.6 L755.7 240.1 L755.7 238.6 L755.7 237.1 L755.8 235.5 L755.8 234 L755.9 232.5 L755.9 231 L756 229.5 L756.1 227.9 L756.1 226.4 L756.2 224.9 L756.3 223.4 L756.5 221.9 L756.6 220.3 L756.7 218.8 L756.9 217.3 L757 215.8 L757.2 214.3 L757.3 212.8 L757.5 211.3 L757.7 209.8 L757.9 208.2 L758.1 206.7 L758.3 205.2 L758.5 203.7 L758.8 202.2 L759 200.7 L759.2 199.2 L759.5 197.7 L759.8 196.2 L760 194.7 L760.3 193.3 L760.6 191.8 L760.9 190.3 L761.2 188.8 L761.5 187.3 L761.8 185.8 L762.1 184.3 L762.5 182.9 L762.8 181.4 L763.2 179.9 L763.5 178.4 L763.9 177 L764.2 175.5 L764.6 174 L765 172.6 L765.4 171.1 L765.8 169.7 L766.2 168.2 L766.6 166.8 L767 165.3 L767.4 163.9 L767.8 162.4 L768.3 161 L768.7 159.5 L769.1 158.1 L769.6 156.7 L770 155.3 L770.5 153.8 L770.9 152.4 L771.4 151 L771.9 149.6 L772.3 148.2 L772.8 146.8 L773.3 145.4 L773.7 144 L774.2 142.6 L774.7 141.3 L775.2 139.9 L775.7 138.5 L776.1 137.2 L776.6 135.8 L777.1 134.5 L777.6 133.1 L778.1 131.8 L778.6 130.5 L779 129.1 L779.5 127.8 L780 126.5 L780.4 125.2 L780.9 124 L781.4 122.7 L781.8 121.4 L782.3 120.2 L782.7 118.9 L783.2 117.7 L783.6 116.4 L784 115.2 L784.4 114 L784.8 112.8 L785.2 111.7 L785.5 110.5 L785.9 109.4 L786.2 108.2 L786.6 107.1 L786.9 106 L787.1 104.9 L787.4 103.9 L787.7 102.8 L787.9 101.8 L788.1 100.8 L788.2 99.8 L788.4 98.9 L788.5 97.9 L788.5 97 L788.6 96.1 L788.6 95.3 L788.5 94.4 L788.4 93.6 L788.3 92.8 L788.1 92.1 L787.9 91.3 L787.6 90.7 L787.3 90 L786.9 89.4 L786.4 88.8 L785.9 88.2 L785.3 87.7 L784.7 87.2 L784 86.8 L783.1 86.4 L782.3 86 L781.3 85.7 L780.3 85.4 L779.1 85.2 L777.9 85 L776.6 84.9 L775.2 84.8 L773.7 84.7 L772.2 84.7 L770.5 84.7 L768.7 84.8 L766.8 84.9 L764.8 85.1 L762.8 85.3 L760.6 85.5 L758.3 85.8 L756 86.1 L753.5 86.5 L750.9 86.9 L748.3 87.4 L745.5 87.8 L742.7 88.4 L739.7 88.9 L736.7 89.5 L733.6 90.2 L730.4 90.8 L727.1 91.5 L723.8 92.3 L720.4 93 L716.9 93.8 L713.3 94.6 L709.6 95.5 L705.9 96.3 L702.1 97.2 L698.3 98.2 L694.4 99.1"/>
<path stroke="#52c569" d="M761.1 275.3 L760.5 273.9 L760 272.5 L759.4 271.1 L758.9 269.7 L758.3 268.3 L757.8 266.9 L757.3 265.6 L756.7 264.2 L756.2 262.8 L755.7 261.4 L755.2 260 L754.7 258.6 L754.3 257.3 L753.8 255.9 L753.3 254.5 L752.9 253.1 L752.4 251.7 L752 250.4 L751.5 249 L751.1 247.6 L750.7 246.3 L750.3 244.9 L749.9 243.5 L749.5 242.2 L749.1 240.8 L748.7 239.4 L748.4 238.1 L748 236.7 L747.6 235.4 L747.3 234 L746.9 232.7 L746.6 231.3 L746.3 230 L745.9 228.6 L745.6 227.3 L745.3 226 L745 224.6 L744.7 223.3 L744.4 222 L744.1 220.6 L743.9 219.3 L743.6 218 L743.3 216.7 L743.1 215.4 L742.8 214 L742.6 212.7 L742.4 211.4 L742.1 210.1 L741.9 208.8 L741.7 207.5 L741.5 206.2 L741.3 205 L741.1 203.7 L740.9 202.4 L740.7 201.1 L740.5 199.8 L740.3 198.6 L740.1 197.3 L739.9 196 L739.8 194.8 L739.6 193.5 L739.4 192.3 L739.3 191.1 L739.1 189.8 L739 188.6 L738.8 187.4 L738.7 186.1 L738.5 184.9 L738.4 183.7 L738.3 182.5 L738.1 181.3 L738 180.1 L737.9 178.9 L737.7 177.7 L737.6 176.6 L737.5 175.4 L737.4 174.2 L737.2 173.1 L737.1 171.9 L737 170.8 L736.8 169.7 L736.7 168.5 L736.6 167.4 L736.5 166.3 L736.3 165.2 L736.2 164.1 L736 163 L735.9 162 L735.8 160.9 L735.6 159.9 L735.4 158.8 L735.3 157.8 L735.1 156.7 L734.9 155.7 L734.8 154.7 L734.6 153.7 L734.4 152.7 L734.2 151.8 L734 150.8 L733.8 149.9 L733.5 148.9 L733.3 148 L733 147.1 L732.8 146.2 L732.5 145.3 L732.2 144.4 L731.9 143.6 L731.6 142.7 L731.3 141.9 L730.9 141.1 L730.6 140.3 L730.2 139.5 L729.8 138.7 L729.4 138 L728.9 137.3 L728.5 136.5 L728 135.8 L727.5 135.2 L726.9 134.5 L726.4 133.8 L725.8 133.2 L725.2 132.6 L724.6 132 L723.9 131.4 L723.2 130.9 L722.5 130.4 L721.8 129.9 L721 129.4 L720.2 128.9 L719.3 128.5 L718.5 128 L717.6 127.6 L716.6 127.2 L715.6 126.9 L714.6 126.6 L713.5 126.2 L712.4 126 L711.3 125.7 L710.1 125.5 L708.9 125.2 L707.6 125 L706.3 124.9 L704.9 124.7 L703.5 124.6 L702.1 124.5 L700.6 124.4 L699.1 124.4 L697.5 124.4 L695.9 124.4 L694.2 124.4 L692.5 124.4 L690.7 124.5 L688.9 124.6 L687 124.8 L685.1 124.9 L683.1 125.1 L681.1 125.3 L679 125.5 L676.9 125.7 L674.8 126 L672.6 126.3 L670.3 126.6 L668 127 L665.6 127.3 L663.3 127.7 L660.8 128.1 L658.3 128.5 L655.8 129 L653.2 129.5 L650.6 129.9 L647.9 130.5 L645.2 131 L642.4 131.5 L639.6 132.1 L636.8 132.7 L633.9 133.3 L631 134 L628.1 134.6 L625.1 135.3 L622 136 L619 136.7 L615.9 137.4 L612.7 138.1 L609.6 138.9 L606.4 139.6 L603.1 140.4 L599.9 141.2 L596.6 142.1 L593.3 142.9 L589.9 143.7 L586.5 144.6 L583.1 145.5 L579.7 146.4 L576.3 147.3 L572.8 148.2 L569.3 149.1 L565.8 150 L562.3 151 L558.7 151.9 L555.2 152.9 L551.6 153.9 L548 154.9 L544.4 155.9 L540.7 156.9 L537.1 158 L533.4 159 L529.8 160 L526.1 161.1"/>
</g>
<g stroke-width="1.4" stroke-linecap="butt">
<path stroke="#52c569" d="M935.8 40.3L950 47"/>
<path stroke="#2ab07f" d="M918.3 59.5L937 70"/>
<path stroke="#25858e" d="M955.8 44.7 L959.4 46.7 L963.6 48.9 L968.4 51.3 L973.5 53.8 L978.8 56.5 L984.3 59.1 L990 61.9 L995.7 64.7 L1001.5 67.5 L1007.3 70.4 L1013.2 73.3 L1019 76.2 L1024.9 79.1 L1030.8 82"/>
<path stroke="#52c569" d="M950 91.7 L953.3 92.2 L956.7 92.9 L960.2 93.7 L963.8 94.6 L967.5 95.6 L971.3 96.7 L975.2 97.9 L979.2 99.2"/>
<path stroke="#2ab07f" d="M934.2 149.2L944.2 155"/>
<path stroke="#2ab07f" d="M1089.2 126.2L1095 132"/>
<path stroke="#52c569" d="M1128.9 137.4 L1134.7 140.3 L1140.5 143.2 L1146.2 146.1 L1151.9 149.1 L1157.5 152 L1163 154.9"/>
<path stroke="#2d708e" d="M1162 146.5L1142.2 145.9"/>
<path stroke="#1e9b8a" d="M1151.1 129L1144.9 129"/>
<path stroke="#2ab07f" d="M1154.2 135.4L1157 140"/>
<path stroke="#25858e" d="M1170.2 144.4L1179.9 150"/>
<path stroke="#2ab07f" d="M1191.2 152.2L1195 160"/>
<path stroke="#2ab07f" d="M1228.3 151.7L1226.7 157"/>
<path stroke="#2ab07f" d="M1247.5 156.7L1241.7 162.8"/>
<path stroke="#2ab07f" d="M1260.8 170.8L1258.3 179.2"/>
<path stroke="#2ab07f" d="M1361.7 196.7L1350.8 200"/>
<path stroke="#52c569" d="M527.8 166.7 L522 168.2 L516.2 169.8 L510.4 171.4 L504.5 173 L498.6 174.7 L492.7 176.4 L486.7 178.1"/>
<path stroke="#2ab07f" d="M545.3 158.6L533.4 156.8"/>
<path stroke="#2ab07f" d="M627.2 142.6L626 142.9"/>
<path stroke="#c3e022" d="M694.4 99.1 L687 100.9 L679.4 102.8 L671.6 104.8 L663.7 106.8 L655.6 108.9 L647.4 111"/>
<path stroke="#52c569" d="M526.1 161.1L497.2 169.4M1306.7 169.2L1313 174.2"/>
<path stroke="#c3e022" d="M1160 111.7L1165 113.9"/>
</g>
<g fill="#ff7043" stroke="none">
<rect x="948.9" y="45.9" width="2.3" height="2.3"/>
<rect x="935.9" y="68.8" width="2.3" height="2.3"/>
<rect x="1029.6" y="80.8" width="2.3" height="2.3"/>
<rect x="978.1" y="98" width="2.3" height="2.3"/>
<rect x="943.1" y="153.8" width="2.3" height="2.3"/>
<rect x="1093.8" y="130.8" width="2.3" height="2.3"/>
<rect x="1161.8" y="153.8" width="2.3" height="2.3"/>
<rect x="1141" y="144.8" width="2.3" height="2.3"/>
<rect x="1143.8" y="127.8" width="2.3" height="2.3"/>
<rect x="1155.8" y="138.8" width="2.3" height="2.3"/>
<rect x="1178.8" y="148.8" width="2.3" height="2.3"/>
<rect x="1193.8" y="158.8" width="2.3" height="2.3"/>
<rect x="1225.5" y="155.8" width="2.3" height="2.3"/>
<rect x="1240.5" y="161.7" width="2.3" height="2.3"/>
<rect x="1257.1" y="178" width="2.3" height="2.3"/>
<rect x="1349.6" y="198.8" width="2.3" height="2.3"/>
<rect x="485.6" y="176.9" width="2.3" height="2.3"/>
<rect x="532.2" y="155.7" width="2.3" height="2.3"/>
<rect x="624.9" y="141.8" width="2.3" height="2.3"/>
<rect x="1311.8" y="173" width="2.3" height="2.3"/>
<rect x="1163.8" y="112.8" width="2.3" height="2.3"/>
</g>
<g id="spo" fill="none" stroke="#8c8c8c">
<g stroke-opacity="0.30" stroke-width="1.4" stroke-dasharray="1.39 2.29">
<path d="M462.6 380.2 L460.9 377.1 L459.4 373.9 L458.1 370.7 L456.8 367.6 L455.7 364.4 L454.7 361.3 L453.8 358.1 L453.1 354.9 L452.5 351.8 L452 348.6 L451.6 345.4 L451.4 342.3 L451.3 339.1 L451.3 336 L451.5 332.8 L451.8 329.6 L452.2 326.5 L452.8 323.3 L453.5 320.1 L454.3 317 L455.2 313.8 L456.3 310.6 L457.5 307.5 L458.8 304.3 L460.3 301.1 L461.9 298 L463.6 294.8 L465.4 291.6 L467.4 288.5 L469.5 285.3 L471.7 282.1 L474 279 L476.5 275.8 L479 272.7 L481.7 269.5 L484.6 266.3 L487.5 263.2 L490.6 260 L493.7 256.9 L497 253.7 L500.4 250.6 L503.9 247.4 L507.6 244.3 L511.3 241.1 L515.2 238 L519.1 234.8 L523.2 231.7 L527.4 228.5 L531.7 225.4 L536 222.3 L540.5 219.1 L545.1 216 L549.8 212.9 L554.5 209.7 L559.4 206.6 L564.4 203.5 L569.4 200.4 L574.5 197.3 L579.8 194.1 L585.1 191 L590.5 187.9 L595.9 184.8 L601.5 181.7 L607.1 178.7 L612.8 175.6 L618.6 172.5 L624.4 169.4 L630.3 166.4 L636.2 163.3 L642.3 160.3 L648.3 157.2 L654.4 154.2 L660.6 151.2 L666.8 148.2 L673.1 145.2 L679.4 142.2 L685.7 139.2 L692.1 136.2 L698.5 133.3 L704.9 130.4 L711.4 127.4 L717.8 124.5 L724.3 121.7 L730.7 118.8 L737.2 116 L743.6 113.2 L750.1 110.4 L756.5 107.7 L762.8 105 L769.2 102.4 L775.4 99.8 L781.7 97.2 L787.8 94.7 L793.9 92.3 L799.8 89.9 L805.7 87.6 L811.4 85.5 L817 83.4 L822.5 81.4 L827.7 79.5 L832.8 77.8 L837.7 76.2 L842.4 74.8 L846.9 73.6 L851.1 72.6 L855.2 71.8 L859 71.2 L862.5 70.8 L865.9 70.7 L869.1 70.8 L872.1 71.1 L874.9 71.7 L877.6 72.5 L880.2 73.5 L882.7 74.7 L885.1 76.1 L887.5 77.7 L889.8 79.4 L892.2 81.2 L894.4 83.2 L896.7 85.3 L899 87.5 L901.2 89.7 L903.5 92.1 L905.7 94.5 L908 97 L910.3 99.6 L912.5 102.2 L914.8 104.8 L917.1 107.5 L919.4 110.2 L921.6 113 L923.9 115.8 L926.2 118.6 L928.5 121.5 L930.8 124.3 L933.1 127.2 L935.3 130.1 L937.6 133.1 L939.9 136"/>
<path d="M474.5 364.9 L472.3 361.7 L470.3 358.5 L468.5 355.2 L466.7 352 L465.1 348.8 L463.6 345.5 L462.2 342.3 L461 339.1 L459.9 335.8 L459 332.6 L458.2 329.4 L457.5 326.1 L456.9 322.9 L456.5 319.7 L456.2 316.4 L456.1 313.2 L456 310 L456.1 306.7 L456.4 303.5 L456.8 300.3 L457.3 297 L457.9 293.8 L458.7 290.6 L459.7 287.3 L460.7 284.1 L461.9 280.9 L463.2 277.6 L464.6 274.4 L466.2 271.2 L467.9 267.9 L469.8 264.7 L471.7 261.5 L473.8 258.2 L476.1 255 L478.4 251.8 L480.9 248.5 L483.5 245.3 L486.2 242.1 L489.1 238.8 L492.1 235.6 L495.2 232.4 L498.4 229.2 L501.7 225.9 L505.2 222.7 L508.8 219.5 L512.5 216.3 L516.3 213 L520.2 209.8 L524.3 206.6 L528.4 203.4 L532.7 200.1 L537.1 196.9 L541.5 193.7 L546.1 190.5 L550.8 187.3 L555.6 184 L560.5 180.8 L565.5 177.6 L570.6 174.4 L575.8 171.2 L581.1 168 L586.4 164.8 L591.9 161.5 L597.5 158.3 L603.1 155.1 L608.8 151.9 L614.6 148.7 L620.5 145.5 L626.5 142.3 L632.5 139.2 L638.6 136 L644.8 132.8 L651 129.6 L657.3 126.4 L663.7 123.3 L670.1 120.1 L676.6 116.9 L683.1 113.8 L689.7 110.6 L696.3 107.5 L703 104.4 L709.6 101.2 L716.3 98.1 L723.1 95 L729.8 92 L736.5 88.9 L743.3 85.9 L750 82.8 L756.7 79.9 L763.3 76.9 L769.9 74 L776.3 71.1 L782.7 68.3 L788.8 65.5 L794.8 62.9 L800.5 60.3 L805.8 57.9 M989.2 55.6 L980.5 53.5 L972.5 51.7 L965.5 50.2 L959.4 49.1 L954.5 48.4 L950.8 48.2 L948.2 48.5 L946.7 49.3 L946 50.5 L945.9 52.1 L946.4 53.9 L947.3 56 L948.5 58.4 L949.9 60.8 L951.5 63.4 L953.2 66.1 L955 68.9 L956.8 71.7 L958.8 74.6 L960.7 77.5 L962.7 80.5 L964.7 83.5 L966.7 86.5 L968.7 89.5 L970.7 92.6 L972.7 95.7 L974.7 98.8 L976.7 101.9 L978.7 105 L980.7 108.1 L982.6 111.3 L984.6 114.4 L986.5 117.6 L988.4 120.7 L990.3 123.9 L992.2 127.1 L994 130.3 L995.9 133.4 L997.7 136.6 L999.4 139.8 L1001.2 143 L1002.9 146.2"/>
<path d="M503.3 371.9 L501 368.7 L498.8 365.4 L496.7 362.2 L494.7 359 L492.9 355.7 L491.2 352.5 L489.6 349.3 L488.1 346 L486.8 342.8 L485.6 339.6 L484.5 336.3 L483.5 333.1 L482.7 329.9 L482 326.7 L481.4 323.4 L480.9 320.2 L480.6 317 L480.4 313.7 L480.3 310.5 L480.4 307.3 L480.5 304 L480.8 300.8 L481.3 297.6 L481.8 294.3 L482.5 291.1 L483.3 287.9 L484.2 284.6 L485.3 281.4 L486.5 278.2 L487.8 275 L489.2 271.7 L490.8 268.5 L492.4 265.3 L494.2 262 L496.2 258.8 L498.2 255.6 L500.4 252.3 L502.6 249.1 L505 245.9 L507.6 242.7 L510.2 239.4 L513 236.2 L515.8 233 L518.8 229.8 L521.9 226.5 L525.1 223.3 L528.5 220.1 L531.9 216.9 L535.4 213.6 L539.1 210.4 L542.9 207.2 L546.7 204 L550.7 200.8 L554.8 197.5 L559 194.3 L563.2 191.1 L567.6 187.9 L572.1 184.7 L576.7 181.5 L581.3 178.3 L586.1 175 L590.9 171.8 L595.9 168.6 L600.9 165.4 L606 162.2 L611.2 159 L616.5 155.8 L621.8 152.6 L627.3 149.4 L632.8 146.2 L638.3 143.1 L644 139.9 L649.7 136.7 L655.5 133.5 L661.3 130.3 L667.3 127.2 L673.2 124 L679.2 120.9 L685.3 117.7 L691.4 114.6 L697.6 111.4 L703.8 108.3 L710 105.2 L716.2 102.1 L722.5 99 L728.8 95.9 L735.1 92.8 L741.4 89.8 L747.7 86.8 L754 83.8 L760.2 80.8 L766.4 77.9 L772.5 75 L778.5 72.1 L784.4 69.3 L790.1 66.6 L795.6 64 L800.8 61.5 L805.7 59.1 L810.1 56.8 M987.5 54.8 L979.4 53 L972.2 51.5 L966 50.4 L960.9 49.7 L957 49.4 L954.2 49.6 L952.5 50.3 L951.7 51.4 L951.7 52.8 L952.2 54.6 L953.2 56.6 L954.5 58.8 L956.1 61.2 L957.9 63.7 L959.8 66.3 L961.9 69 L964.1 71.8 L966.3 74.6 L968.5 77.5 L970.8 80.5 L973.2 83.4 L975.5 86.4 L977.8 89.4 L980.2 92.5 L982.6 95.5 L984.9 98.6 L987.3 101.7 L989.6 104.8 L991.9 107.9 L994.2 111.1 L996.5 114.2 L998.8 117.3 L1001.1 120.5 L1003.3 123.6 L1005.5 126.8 L1007.7 130 L1009.9 133.1 L1012 136.3 L1014.1 139.5"/>
<path d="M585.3 380.8 L583.2 377.5 L581.1 374.3 L579.2 371.1 L577.4 367.8 L575.7 364.6 L574.1 361.3 L572.6 358.1 L571.1 354.9 L569.8 351.6 L568.6 348.4 L567.5 345.1 L566.5 341.9 L565.5 338.6 L564.7 335.4 L564 332.2 L563.4 328.9 L562.9 325.7 L562.5 322.4 L562.2 319.2 L562 315.9 L561.9 312.7 L561.9 309.5 L562 306.2 L562.2 303 L562.5 299.7 L562.9 296.5 L563.4 293.2 L564.1 290 L564.8 286.8 L565.6 283.5 L566.5 280.3 L567.6 277 L568.7 273.8 L569.9 270.5 L571.3 267.3 L572.7 264.1 L574.2 260.8 L575.8 257.6 L577.6 254.3 L579.4 251.1 L581.3 247.8 L583.3 244.6 L585.5 241.4 L587.7 238.1 L590 234.9 L592.4 231.6 L594.9 228.4 L597.4 225.2 L600.1 221.9 L602.9 218.7 L605.7 215.4 L608.7 212.2 L611.7 209 L614.8 205.7 L618.1 202.5 L621.3 199.3 L624.7 196 L628.2 192.8 L631.7 189.6 L635.3 186.3 L639 183.1 L642.8 179.9 L646.7 176.6 L650.6 173.4 L654.6 170.2 L658.7 166.9 L662.8 163.7 L667.1 160.5 L671.4 157.2 L675.7 154 L680.1 150.8 L684.6 147.6 L689.2 144.4 L693.8 141.1 L698.5 137.9 L703.2 134.7 L708 131.5 L712.8 128.3 L717.7 125.1 L722.6 121.9 L727.6 118.7 L732.6 115.5 L737.7 112.3 L742.8 109.1 L748 105.9 L753.2 102.7 L758.4 99.5 L763.6 96.4 L768.9 93.2 L774.2 90.1 L779.5 86.9 L784.8 83.8 L790.1 80.7 L795.4 77.6 L800.7 74.5 L806 71.5 L811.3 68.4 L816.4 65.5 L821.5 62.5 L826.5 59.7 L831.3 56.9 L835.9 54.2 L840.2 51.6 L844 49.3 L847.2 47.1 L849.4 45.4 L850.4 44 M951.2 43.2 L947.5 43 L945.6 43.5 L945.3 44.6 L946.2 46.2 L947.9 48.2 L950.4 50.4 L953.2 52.9 L956.3 55.5 L959.7 58.3 L963.2 61.1 L966.8 64 L970.5 67 L974.2 70 L978 73 L981.8 76.1 L985.6 79.1 L989.4 82.3 L993.2 85.4 L997 88.5 L1000.8 91.6 L1004.6 94.8 L1008.4 98 L1012.2 101.1 L1015.9 104.3 L1019.6 107.5 L1023.3 110.7 L1026.9 113.9 L1030.6 117.1 L1034.1 120.3 L1037.7 123.5 L1041.2 126.7 L1044.7 129.9"/>
<path d="M529.1 425.3 L524.6 422.1 L520.2 418.9 L516 415.7 L511.8 412.4 L507.8 409.2 L503.9 406 L500.1 402.8 L496.5 399.5 L492.9 396.3 L489.5 393.1 L486.2 389.8 L483 386.6 L480 383.4 L477.1 380.1 L474.3 376.9 L471.6 373.7 L469.1 370.5 L466.7 367.2 L464.4 364 L462.3 360.8 L460.3 357.5 L458.4 354.3 L456.6 351.1 L455 347.8 L453.5 344.6 L452.2 341.4 L451 338.1 L449.9 334.9 L449 331.7 L448.2 328.4 L447.5 325.2 L447 322 L446.6 318.7 L446.4 315.5 L446.2 312.3 L446.3 309 L446.4 305.8 L446.7 302.6 L447.1 299.3 L447.7 296.1 L448.4 292.9 L449.3 289.6 L450.2 286.4 L451.4 283.2 L452.6 279.9 L454 276.7 L455.5 273.5 L457.2 270.2 L458.9 267 L460.9 263.8 L462.9 260.5 L465.1 257.3 L467.4 254.1 L469.9 250.9 L472.4 247.6 L475.1 244.4 L478 241.2 L480.9 237.9 L484 234.7 L487.2 231.5 L490.5 228.2 L494 225 L497.6 221.8 L501.3 218.6 L505.1 215.3 L509 212.1 L513 208.9 L517.2 205.7 L521.5 202.5 L525.9 199.2 L530.4 196 L535 192.8 L539.7 189.6 L544.5 186.4 L549.4 183.1 L554.5 179.9 L559.6 176.7 L564.8 173.5 L570.2 170.3 L575.6 167.1 L581.1 163.9 L586.7 160.7 L592.4 157.5 L598.2 154.3 L604.1 151.1 L610 147.9 L616 144.7 L622.2 141.5 L628.3 138.3 L634.6 135.1 L640.9 131.9 L647.3 128.8 L653.8 125.6 L660.3 122.4 L666.9 119.3 L673.5 116.1 L680.2 113 L686.9 109.8 L693.6 106.7 L700.4 103.6 L707.2 100.4 L714.1 97.3 L721 94.3 L727.8 91.2 L734.7 88.1 L741.5 85.1 L748.4 82.1 L755.2 79.1 L761.9 76.2 L768.6 73.3 L775.1 70.5 L781.5 67.7 L787.7 65 L793.7 62.3 M1004.1 59.8 L994.7 57.4 L985.7 55.2 L977.4 53.3 L969.8 51.6 L963.2 50.2 L957.5 49.2 L953 48.7 L949.7 48.6 L947.4 49 L946 49.9 L945.4 51.2 L945.4 52.9 L945.9 54.8 L946.7 57 L947.8 59.3 L949.2 61.8 L950.6 64.4 L952.2 67.1 L953.8 69.9 L955.5 72.7 L957.3 75.6 L959.1 78.5 L960.9 81.5 L962.8 84.5 L964.6 87.5"/>
<path d="M961.4 490 L963.9 487 L966.5 484 L969 481 L971.4 478 L973.9 475 L976.4 471.9 L978.8 468.9 L981.2 465.8 L983.6 462.8 L986 459.7 L988.4 456.6 L990.7 453.6 L993 450.5 L995.3 447.4 L997.6 444.3 L999.9 441.2 L1002.1 438.1 L1004.3 435 L1006.5 431.9 L1008.6 428.8 L1010.7 425.7 L1012.8 422.6 L1014.9 419.5 L1016.9 416.3 L1018.9 413.2 L1020.8 410.1 L1022.8 407 L1024.7 403.8 L1026.5 400.7 L1028.3 397.6 L1030.1 394.4 L1031.9 391.3 L1033.6 388.1 L1035.3 385 L1036.9 381.9 L1038.6 378.7 L1040.1 375.6 L1041.7 372.4 L1043.1 369.3 L1044.6 366.1 L1046 363 L1047.4 359.8 L1048.7 356.7 L1050 353.5 L1051.2 350.4 L1052.4 347.2 L1053.6 344.1 L1054.7 340.9 L1055.8 337.8 L1056.8 334.6 L1057.8 331.4 L1058.7 328.3 L1059.6 325.1 L1060.5 322 L1061.3 318.8 L1062 315.7 L1062.8 312.5 L1063.4 309.4 L1064 306.2 L1064.6 303 L1065.1 299.9 L1065.6 296.7 L1066.1 293.6 L1066.4 290.4 L1066.8 287.3 L1067.1 284.1 L1067.3 281 L1067.5 277.8 L1067.7 274.7 L1067.8 271.5 L1067.8 268.4 L1067.9 265.2 L1067.8 262.1 L1067.7 258.9 L1067.6 255.8 L1067.4 252.7 L1067.2 249.5 L1066.9 246.4 L1066.6 243.2 L1066.3 240.1 L1065.9 237 L1065.4 233.8 L1064.9 230.7 L1064.4 227.6 L1063.8 224.5 L1063.2 221.3 L1062.5 218.2 L1061.8 215.1 L1061 212 L1060.2 208.9 L1059.4 205.8 L1058.5 202.7 L1057.6 199.6 L1056.6 196.5 L1055.6 193.4 L1054.5 190.3 L1053.5 187.2 L1052.3 184.1 L1051.2 181.1 L1050 178 L1048.8 174.9 L1047.5 171.9 L1046.2 168.8 L1044.9 165.8 L1043.5 162.8 L1042.1 159.7 L1040.7 156.7 L1039.2 153.7 L1037.8 150.7 L1036.3 147.8 L1034.8 144.8 L1033.2 141.8 L1031.7 138.9 L1030.1 136 L1028.5 133.1 L1026.9 130.2 L1025.3 127.3 L1023.7 124.5 L1022.1 121.6 L1020.5 118.8 L1018.9 116.1 L1017.3 113.3 L1015.7 110.6 L1014.2 108 L1012.7 105.4 L1011.2 102.8 L1009.8 100.3 L1008.4 97.8 L1007.1 95.4 L1005.9 93 L1004.8 90.8 L1003.8 88.6 L1002.9 86.5 L1002.3 84.6 L1001.8 82.7 L1001.5 81 L1001.4 79.4 L1001.6 77.9 L1002.2 76.7 L1003.1 75.6"/>
<path d="M802.1 545.2 L796.8 543.3 L791.4 541.3 L785.8 539.2 L780.1 537.1 L774.3 534.9 L768.5 532.6 L762.5 530.3 L756.5 527.9 L750.5 525.4 L744.4 522.9 L738.2 520.4 L732.1 517.8 L725.9 515.2 L719.6 512.6 L713.4 509.9 L707.1 507.2 L700.9 504.4 L694.6 501.7 L688.4 498.9 L682.2 496.1 L676 493.2 L669.8 490.4 L663.6 487.5 L657.5 484.7 L651.4 481.8 L645.3 478.9 L639.3 476 L633.4 473 L627.4 470.1 L621.6 467.1 L615.8 464.2 L610 461.2 L604.3 458.2 L598.7 455.2 L593.1 452.2 L587.6 449.2 L582.2 446.2 L576.9 443.2 L571.6 440.2 L566.4 437.1 L561.3 434.1 L556.3 431.1 L551.4 428 L546.5 425 L541.7 421.9 L537.1 418.9 L532.5 415.8 L528 412.7 L523.7 409.7 L519.4 406.6 L515.2 403.5 L511.1 400.4 L507.1 397.4 L503.3 394.3 L499.5 391.2 L495.9 388.1 L492.3 385 L488.9 381.9 L485.6 378.8 L482.4 375.7 L479.3 372.6 L476.3 369.5 L473.4 366.4 L470.7 363.3 L468.1 360.2 L465.6 357.1 L463.2 354 L460.9 350.9 L458.8 347.8 L456.8 344.7 L454.9 341.6 L453.1 338.5 L451.5 335.4 L450 332.3 L448.6 329.1 L447.3 326 L446.2 322.9 L445.1 319.8 L444.3 316.7 L443.5 313.6 L442.9 310.5 L442.4 307.4 L442 304.3 L441.7 301.1 L441.6 298 L441.6 294.9 L441.8 291.8 L442 288.7 L442.4 285.6 L442.9 282.5 L443.6 279.4 L444.3 276.3 L445.2 273.2 L446.3 270.1 L447.4 267 L448.7 263.9 L450.1 260.8 L451.6 257.7 L453.2 254.6 L455 251.5 L456.9 248.4 L458.9 245.3 L461 242.3 L463.2 239.2 L465.6 236.1 L468.1 233 L470.7 230 L473.4 226.9 L476.2 223.8 L479.1 220.8 L482.1 217.7 L485.2 214.7 L488.5 211.6 L491.8 208.6 L495.3 205.5 L498.8 202.5 L502.5 199.5 L506.2 196.4 L510 193.4 L514 190.4 L518 187.4 L522.1 184.4 L526.3 181.4 L530.5 178.4 L534.9 175.5 L539.3 172.5 L543.8 169.6 L548.3 166.6 L553 163.7 L557.6 160.8 L562.4 157.9 L567.2 155 L572 152.1 L576.9 149.2 L581.8 146.4 L586.7 143.6 L591.7 140.8 L596.7 138 L601.7 135.2 L606.7 132.5"/>
<path d="M804.7 558.3 L798.2 555.6 L791.6 552.9 L784.9 550.1 L778.2 547.3 L771.5 544.4 L764.7 541.5 L758 538.6 L751.2 535.7 L744.4 532.7 L737.6 529.7 L730.8 526.7 L724 523.7 L717.2 520.6 L710.5 517.6 L703.8 514.5 L697.2 511.4 L690.5 508.4 L683.9 505.3 L677.4 502.2 L670.9 499.1 L664.5 495.9 L658.1 492.8 L651.8 489.7 L645.5 486.6 L639.3 483.4 L633.2 480.3 L627.1 477.1 L621.1 474 L615.2 470.8 L609.3 467.7 L603.6 464.5 L597.9 461.3 L592.3 458.2 L586.8 455 L581.4 451.8 L576 448.6 L570.8 445.5 L565.6 442.3 L560.6 439.1 L555.6 435.9 L550.7 432.7 L546 429.5 L541.3 426.4 L536.8 423.2 L532.3 420 L528 416.8 L523.7 413.6 L519.6 410.4 L515.6 407.2 L511.7 404 L507.9 400.8 L504.2 397.6 L500.7 394.4 L497.2 391.2 L493.9 388 L490.7 384.8 L487.6 381.6 L484.7 378.4 L481.9 375.2 L479.1 372 L476.6 368.8 L474.1 365.6 L471.8 362.4 L469.5 359.2 L467.5 356 L465.5 352.8 L463.7 349.5 L462 346.3 L460.4 343.1 L459 339.9 L457.7 336.7 L456.5 333.5 L455.5 330.3 L454.6 327.1 L453.8 323.9 L453.2 320.7 L452.7 317.5 L452.3 314.3 L452 311 L451.9 307.8 L452 304.6 L452.1 301.4 L452.4 298.2 L452.8 295 L453.4 291.8 L454.1 288.6 L454.9 285.4 L455.8 282.2 L456.9 279 L458.2 275.8 L459.5 272.6 L461 269.3 L462.6 266.1 L464.3 262.9 L466.2 259.7 L468.2 256.5 L470.3 253.3 L472.6 250.1 L474.9 246.9 L477.4 243.7 L480.1 240.5 L482.8 237.3 L485.7 234.1 L488.7 230.9 L491.8 227.7 L495 224.5 L498.3 221.4 L501.8 218.2 L505.4 215 L509.1 211.8 L512.9 208.6 L516.8 205.4 L520.8 202.2 L525 199 L529.2 195.9 L533.6 192.7 L538 189.5 L542.6 186.3 L547.2 183.2 L552 180 L556.8 176.8 L561.8 173.7 L566.8 170.5 L571.9 167.3 L577.1 164.2 L582.4 161 L587.8 157.9 L593.3 154.8 L598.8 151.6 L604.4 148.5 L610.1 145.4 L615.9 142.2 L621.7 139.1 L627.6 136 L633.5 132.9 L639.5 129.8 L645.5 126.8 L651.6 123.7 L657.7 120.6 L663.9 117.6"/>
<path d="M654.3 437.4 L649.9 435.7 L645.5 434 L641.1 432.3 L636.7 430.6 L632.2 428.8 L627.8 427 L623.4 425.2 L619 423.3 L614.5 421.5 L610.1 419.6 L605.7 417.7 L601.4 415.7 L597 413.8 L592.6 411.8 L588.3 409.8 L584 407.8 L579.7 405.8 L575.4 403.7 L571.2 401.6 L567 399.6 L562.8 397.5 L558.6 395.4 L554.5 393.2 L550.4 391.1 L546.3 388.9 L542.3 386.8 L538.4 384.6 L534.4 382.4 L530.5 380.2 L526.7 378 L522.9 375.8 L519.2 373.6 L515.5 371.3 L511.8 369.1 L508.2 366.8 L504.7 364.6 L501.2 362.3 L497.8 360 L494.4 357.7 L491.1 355.5 L487.8 353.2 L484.6 350.9 L481.5 348.6 L478.4 346.3 L475.4 344 L472.5 341.6 L469.6 339.3 L466.8 337 L464 334.7 L461.4 332.4 L458.8 330 L456.2 327.7 L453.7 325.4 L451.3 323 L449 320.7 L446.8 318.4 L444.6 316.1 L442.5 313.7 L440.4 311.4 L438.4 309.1 L436.5 306.7 L434.7 304.4 L432.9 302.1 L431.3 299.8 L429.6 297.5 L428.1 295.2 L426.6 292.8 L425.2 290.5 L423.9 288.2 L422.7 285.9 L421.5 283.7 L420.3 281.4 L419.3 279.1 L418.3 276.8 L417.4 274.6 L416.6 272.3 L415.8 270.1 L415.1 267.8 L414.4 265.6 L413.8 263.4 L413.3 261.1 L412.8 258.9 L412.4 256.7 L412 254.6 L411.7 252.4 L411.5 250.2 L411.3 248.1 L411.2 246 L411.1 243.8 L411 241.7 L411 239.6 L411.1 237.6 L411.1 235.5 L411.3 233.5 L411.4 231.4 L411.6 229.4 L411.8 227.4 L412.1 225.5 L412.3 223.5 L412.6 221.6 L412.9 219.7 L413.3 217.8 L413.6 215.9 L414 214.1 L414.3 212.3 L414.7 210.5 M1384.4 208.7 L1378.6 207 L1372.8 205.3 L1367 203.6 L1361.3 202 L1355.5 200.4 L1349.8 198.8 L1344.1 197.2 L1338.4 195.7 L1332.8 194.3 L1327.2 192.8 L1321.7 191.4 L1316.2 190 L1310.8 188.7 L1305.4 187.4 L1300.1 186.2 L1294.8 185 L1289.6 183.8 L1284.5 182.7 L1279.4 181.6 L1274.4 180.6 L1269.5 179.6 L1264.7 178.7 L1259.9 177.8 L1255.3 177 L1250.7 176.2 L1246.2 175.5 L1241.9 174.9 L1237.6 174.2 L1233.4 173.7 L1229.2 173.2 L1225.2 172.7 L1221.3 172.3 L1217.5 172"/>
</g>
<path stroke-opacity="0.8" stroke-width="1.4" d="M939.9 136L946.3 144.4 M1002.9 146.2L1008.3 156.6 M1014.1 139.5L1021.5 151.1 M1044.7 129.9L1053.5 138.2 M964.6 87.5L968.3 93.6 M1003.1 75.6L1033.7 75.6 M606.7 132.5L646.7 111.3 M663.9 117.6L690 105 M1217.5 172L1192.5 171.3 M1148.8 108.6L1137.9 105.1"/>
</g>
<g stroke-width="2.08">
<path stroke="#2d708e" d="M437.3 205.9 L440.2 204.1 L443.4 202.4 L446.6 200.7 L450 199 L453.5 197.3 L457.1 195.6 L460.8 194 L464.5 192.4 L468.2 190.9 L472 189.5 L475.7 188.1 L479.4 186.8 L483 185.6 L486.6 184.5 L490 183.5 L493.2 182.6 L496.3 181.8 L499.2 181.2 L501.9 180.6 L504.4 180.2 L506.7 180 L508.7 179.8 L510.4 179.8 L511.9 180 L513 180.2 L514 180.6 L514.6 181.2 L514.9 181.8 L515 182.6 L514.8 183.5 L514.4 184.5 L513.7 185.6 L512.7 186.8 L511.6 188.1 L510.2 189.5 L508.6 190.9 L506.8 192.4 L504.8 194 L502.6 195.6 L500.4 197.3 L497.9 199 L495.4 200.7 L492.7 202.4 L490 204.1 L487.2 205.9 L484.3 207.6 L481.3 209.3 L478.4 211 L475.4 212.6 L472.3 214.2 L469.3 215.8 L466.2 217.2 L463.2 218.7 L460.2 220 L457.3 221.3 L454.3 222.5 L451.5 223.7 L448.7 224.7 L445.9 225.7 L443.3 226.5 L440.7 227.3 L438.2 227.9 L435.8 228.5 L433.6 228.9 L431.4 229.3 L429.4 229.5 L427.5 229.6 L425.8 229.6 L424.2 229.5 L422.8 229.3 L421.5 228.9 L420.5 228.5 L419.6 227.9 L418.9 227.3 L418.4 226.5 L418.1 225.7 L418 224.7 L418.2 223.7 L418.5 222.5 L419.1 221.3 L419.9 220 L421 218.7 L422.3 217.2 L423.8 215.8 L425.5 214.2 L427.4 212.6 L429.6 211 L432 209.3 L434.5 207.6 L437.3 205.9Z"/>
<path stroke="#1e9b8a" d="M539.6 160.8 L543.2 159.1 L547 157.3 L551 155.6 L555.1 153.9 L559.3 152.2 L563.6 150.5 L568 148.8 L572.4 147.2 L576.9 145.6 L581.3 144.1 L585.7 142.7 L590 141.4 L594.2 140.1 L598.2 138.9 L602.1 137.9 L605.8 136.9 L609.3 136.1 L612.5 135.4 L615.5 134.8 L618.2 134.4 L620.6 134.1 L622.6 134 L624.4 134 L625.8 134.1 L626.8 134.4 L627.5 134.8 L627.9 135.4 L627.9 136.1 L627.6 136.9 L627 137.9 L626.1 138.9 L624.8 140.1 L623.3 141.4 L621.5 142.7 L619.5 144.1 L617.3 145.6 L614.8 147.2 L612.1 148.8 L609.3 150.5 L606.3 152.2 L603.2 153.9 L599.9 155.6 L596.5 157.3 L593.1 159.1 L589.6 160.8 L586 162.5 L582.3 164.2 L578.7 165.8 L575 167.4 L571.4 169 L567.7 170.5 L564.1 171.9 L560.5 173.3 L556.9 174.6 L553.5 175.9 L550.1 177 L546.7 178.1 L543.5 179.1 L540.4 180 L537.4 180.8 L534.5 181.5 L531.8 182.2 L529.2 182.7 L526.7 183.1 L524.5 183.4 L522.4 183.6 L520.4 183.7 L518.7 183.7 L517.2 183.6 L515.8 183.4 L514.7 183.1 L513.8 182.7 L513.2 182.2 L512.7 181.5 L512.5 180.8 L512.6 180 L512.9 179.1 L513.4 178.1 L514.2 177 L515.3 175.9 L516.6 174.6 L518.2 173.3 L520 171.9 L522.1 170.5 L524.4 169 L527 167.4 L529.8 165.8 L532.9 164.2 L536.1 162.5 L539.6 160.8Z"/>
<path stroke="#2ab07f" d="M564.2 268.1 L565.1 266.3 L566.1 264.6 L567.3 262.9 L568.6 261.2 L570.1 259.5 L571.7 257.9 L573.4 256.3 L575.1 254.8 L577 253.3 L578.9 251.9 L580.9 250.6 L583 249.3 L585.1 248.2 L587.2 247.1 L589.3 246.2 L591.4 245.3 L593.5 244.6 L595.5 244 L597.6 243.5 L599.5 243.1 L601.4 242.8 L603.2 242.7 L605 242.7 L606.6 242.8 L608.1 243.1 L609.6 243.5 L610.9 244 L612.1 244.6 L613.2 245.3 L614.1 246.2 L615 247.1 L615.7 248.2 L616.3 249.3 L616.7 250.6 L617 251.9 L617.3 253.3 L617.3 254.8 L617.3 256.3 L617.2 257.9 L616.9 259.5 L616.5 261.2 L616 262.9 L615.4 264.6 L614.8 266.3 L614 268.1 L613.1 269.8 L612.1 271.5 L611.1 273.2 L609.9 274.9 L608.7 276.5 L607.5 278.1 L606.1 279.6 L604.7 281.1 L603.2 282.5 L601.7 283.9 L600.1 285.1 L598.5 286.3 L596.8 287.4 L595.1 288.4 L593.4 289.3 L591.6 290.1 L589.8 290.7 L588 291.3 L586.3 291.8 L584.5 292.1 L582.7 292.4 L580.9 292.5 L579.2 292.5 L577.5 292.4 L575.8 292.1 L574.2 291.8 L572.7 291.3 L571.2 290.7 L569.8 290.1 L568.5 289.3 L567.3 288.4 L566.2 287.4 L565.2 286.3 L564.3 285.1 L563.6 283.9 L563 282.5 L562.5 281.1 L562.2 279.6 L562 278.1 L562 276.5 L562.1 274.9 L562.4 273.2 L562.8 271.5 L563.4 269.8 L564.2 268.1Z"/>
<path stroke="#25858e" d="M705.7 242.5 L706.5 240.8 L707.4 239.1 L708.4 237.4 L709.6 235.7 L710.8 234 L712.2 232.3 L713.7 230.7 L715.3 229.2 L717 227.7 L718.8 226.3 L720.6 224.9 L722.5 223.7 L724.4 222.5 L726.3 221.4 L728.3 220.4 L730.3 219.6 L732.3 218.8 L734.2 218.2 L736.2 217.7 L738.1 217.3 L739.9 217 L741.7 216.9 L743.4 216.9 L745.1 217 L746.7 217.3 L748.2 217.7 L749.6 218.2 L750.9 218.8 L752.1 219.6 L753.2 220.4 L754.1 221.4 L755 222.5 L755.8 223.7 L756.4 224.9 L756.9 226.3 L757.3 227.7 L757.6 229.2 L757.7 230.7 L757.7 232.3 L757.7 234 L757.5 235.7 L757.1 237.4 L756.7 239.1 L756.2 240.8 L755.5 242.5 L754.8 244.3 L753.9 246 L753 247.7 L751.9 249.3 L750.8 250.9 L749.5 252.5 L748.2 254 L746.9 255.5 L745.4 256.9 L743.9 258.2 L742.3 259.4 L740.7 260.6 L739.1 261.7 L737.4 262.6 L735.6 263.5 L733.8 264.3 L732.1 265 L730.3 265.5 L728.5 266 L726.7 266.3 L724.9 266.6 L723.1 266.7 L721.4 266.7 L719.7 266.6 L718.1 266.3 L716.5 266 L714.9 265.5 L713.5 265 L712.1 264.3 L710.8 263.5 L709.6 262.6 L708.5 261.7 L707.5 260.6 L706.6 259.4 L705.8 258.2 L705.2 256.9 L704.7 255.5 L704.3 254 L704.1 252.5 L704 250.9 L704 249.3 L704.2 247.7 L704.6 246 L705.1 244.3 L705.7 242.5Z"/>
<path stroke="#52c569" d="M736.1 275.7 L736.5 274 L737 272.2 L737.7 270.5 L738.4 268.8 L739.3 267.2 L740.4 265.5 L741.5 264 L742.7 262.4 L744 261 L745.4 259.6 L746.9 258.2 L748.5 257 L750.1 255.9 L751.8 254.8 L753.6 253.9 L755.3 253 L757.1 252.3 L758.9 251.7 L760.7 251.2 L762.5 250.8 L764.3 250.5 L766.1 250.4 L767.8 250.4 L769.5 250.5 L771.1 250.8 L772.7 251.2 L774.3 251.7 L775.7 252.3 L777.1 253 L778.4 253.9 L779.6 254.8 L780.8 255.9 L781.8 257 L782.7 258.2 L783.6 259.6 L784.3 261 L784.9 262.4 L785.4 264 L785.8 265.5 L786.1 267.2 L786.3 268.8 L786.4 270.5 L786.3 272.2 L786.2 274 L785.9 275.7 L785.6 277.4 L785.1 279.2 L784.5 280.8 L783.8 282.5 L783 284.1 L782.1 285.7 L781.2 287.3 L780.1 288.8 L778.9 290.2 L777.7 291.5 L776.4 292.8 L775 294 L773.5 295.1 L772 296 L770.5 296.9 L768.9 297.7 L767.2 298.4 L765.5 299 L763.8 299.5 L762.1 299.8 L760.4 300.1 L758.6 300.2 L756.9 300.2 L755.2 300.1 L753.5 299.8 L751.8 299.5 L750.2 299 L748.6 298.4 L747.1 297.7 L745.6 296.9 L744.2 296 L742.9 295.1 L741.7 294 L740.6 292.8 L739.6 291.5 L738.7 290.2 L737.9 288.8 L737.2 287.3 L736.7 285.7 L736.2 284.1 L735.9 282.5 L735.8 280.8 L735.8 279.2 L735.9 277.4 L736.1 275.7Z"/>
<path stroke="#c3e022" d="M742.2 324.1 L742.2 322.3 L742.4 320.6 L742.7 318.9 L743.2 317.2 L743.7 315.6 L744.4 314 L745.2 312.4 L746.1 310.9 L747.2 309.5 L748.3 308.1 L749.5 306.8 L750.8 305.6 L752.2 304.5 L753.7 303.5 L755.2 302.5 L756.8 301.7 L758.5 301 L760.1 300.4 L761.8 299.9 L763.6 299.6 L765.3 299.3 L767 299.2 L768.8 299.2 L770.5 299.3 L772.2 299.6 L773.9 299.9 L775.5 300.4 L777.1 301 L778.6 301.7 L780.1 302.5 L781.5 303.5 L782.8 304.5 L784.1 305.6 L785.3 306.8 L786.4 308.1 L787.4 309.5 L788.3 310.9 L789.2 312.4 L789.9 314 L790.5 315.6 L791 317.2 L791.4 318.9 L791.7 320.6 L791.9 322.3 L792 324.1 L792 325.8 L791.8 327.5 L791.6 329.2 L791.2 330.9 L790.8 332.6 L790.2 334.2 L789.5 335.7 L788.7 337.2 L787.9 338.7 L786.9 340.1 L785.8 341.4 L784.7 342.6 L783.5 343.7 L782.1 344.7 L780.8 345.6 L779.3 346.5 L777.8 347.2 L776.2 347.8 L774.6 348.3 L773 348.6 L771.3 348.9 L769.6 349 L767.8 349 L766.1 348.9 L764.3 348.6 L762.6 348.3 L760.9 347.8 L759.2 347.2 L757.5 346.5 L755.9 345.6 L754.4 344.7 L752.9 343.7 L751.4 342.6 L750.1 341.4 L748.8 340.1 L747.6 338.7 L746.5 337.2 L745.6 335.7 L744.7 334.2 L744 332.6 L743.4 330.9 L742.9 329.2 L742.5 327.5 L742.3 325.8 L742.2 324.1Z"/>
</g>
<path stroke="#ff0000" stroke-width="1.25" d="M422.7 219.5h6.6M426 216.2v6.6 M534.7 169.5h6.6M538 166.2v6.6 M575.1 271.6h6.6M578.4 268.3v6.6 M606.5 271.1h6.6M609.8 267.8v6.6 M582.9 267.6h6.6M586.2 264.3v6.6 M587.4 270.7h6.6M590.7 267.4v6.6 M592.3 262.7h6.6M595.6 259.4v6.6 M595.4 265.3h6.6M598.7 262v6.6 M588.7 266h6.6M592 262.7v6.6 M593.7 268h6.6M597 264.7v6.6 M589.7 269h6.6M593 265.7v6.6 M584.7 269h6.6M588 265.7v6.6 M590.7 264h6.6M594 260.7v6.6 M722.3 242.1h6.6M725.6 238.8v6.6 M742.2 240.5h6.6M745.5 237.2v6.6 M740.9 268.4h6.6M744.2 265.1v6.6 M748.9 277.3h6.6M752.2 274v6.6 M755.1 277.7h6.6M758.4 274.4v6.6 M753.4 273.8h6.6M756.7 270.5v6.6 M751.7 278h6.6M755 274.7v6.6 M766.2 323.2h6.6M769.5 319.9v6.6"/>
</g>
<g font-family="DejaVu Sans, Liberation Sans, sans-serif" font-size="10.4" fill="#fff" text-anchor="middle">
<text x="464.2" y="207.5">LMI</text>
<text x="568.4" y="161.7">LUM</text>
<text x="589.3" y="271.4">ORI</text>
<text x="730.9" y="244.6">CTA</text>
<text x="761.1" y="278.1">STA</text>
<text x="767.1" y="327.3">OER</text>
</g>
</svg>
</body></html>
